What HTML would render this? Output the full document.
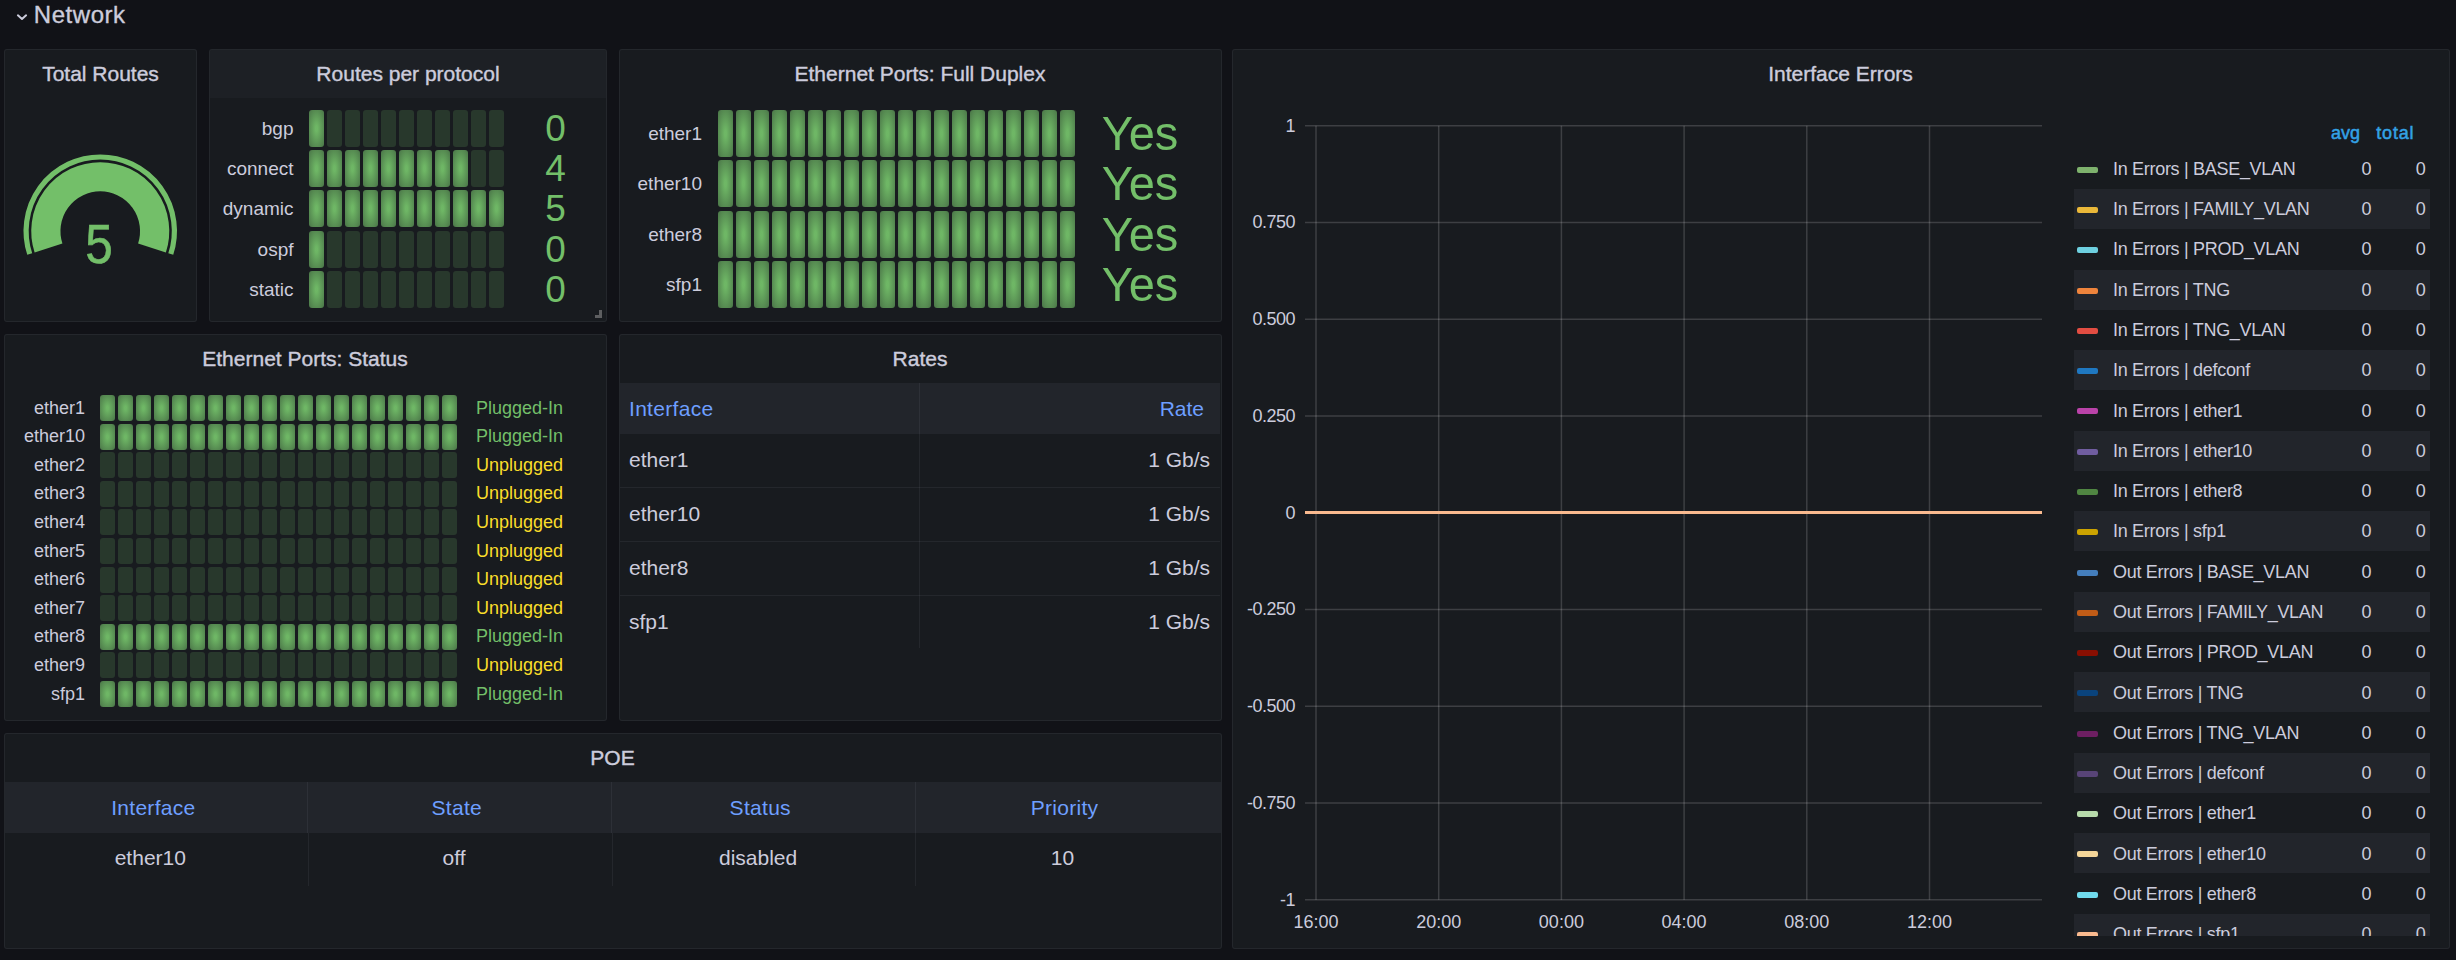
<!DOCTYPE html>
<html><head><meta charset="utf-8"><style>
html,body{margin:0;padding:0;}
body{width:2456px;height:960px;overflow:hidden;background:#111217;position:relative;font-family:"Liberation Sans", sans-serif;}
.t{position:absolute;white-space:pre;font-family:"Liberation Sans", sans-serif;}
.p{position:absolute;box-sizing:border-box;background:#181b1f;border:1px solid rgba(204,204,220,0.07);border-radius:3px;}
</style></head><body>
<svg style="position:absolute;left:0;top:0" width="40" height="40"><polyline points="17.9,15.3 22,19.0 26.1,15.3" fill="none" stroke="#ccccdc" stroke-width="2" stroke-linecap="round" stroke-linejoin="round"/></svg>
<div class="t" style="left:33.8px;top:3.00px;font-size:24px;line-height:24px;color:#ccccdc;font-weight:400;letter-spacing:0.55px;-webkit-text-stroke:0.35px #ccccdc;">Network</div>
<div class="p" style="left:4px;top:49px;width:193px;height:273px;"></div>
<div class="p" style="left:209px;top:49px;width:398px;height:273px;"></div>
<div style="position:absolute;left:210px;top:50px;width:396px;height:48px;background:rgba(204,204,220,0.03);border-radius:2px 2px 0 0;"></div>
<div class="p" style="left:619px;top:49px;width:603px;height:273px;"></div>
<div class="p" style="left:1232px;top:49px;width:1218px;height:900px;"></div>
<div class="p" style="left:4px;top:334px;width:603px;height:387px;"></div>
<div class="p" style="left:619px;top:334px;width:603px;height:387px;"></div>
<div class="p" style="left:4px;top:733px;width:1218px;height:216px;"></div>
<div class="t" style="left:-899.5px;width:2000px;text-align:center;top:63.15px;font-size:21px;line-height:21px;color:#ccccdc;font-weight:400;-webkit-text-stroke:0.4px #ccccdc;">Total Routes</div>
<div class="t" style="left:-592px;width:2000px;text-align:center;top:63.15px;font-size:21px;line-height:21px;color:#ccccdc;font-weight:400;-webkit-text-stroke:0.4px #ccccdc;">Routes per protocol</div>
<div class="t" style="left:-80px;width:2000px;text-align:center;top:63.15px;font-size:21px;line-height:21px;color:#ccccdc;font-weight:400;-webkit-text-stroke:0.4px #ccccdc;">Ethernet Ports: Full Duplex</div>
<div class="t" style="left:840.5px;width:2000px;text-align:center;top:63.15px;font-size:21px;line-height:21px;color:#ccccdc;font-weight:400;-webkit-text-stroke:0.4px #ccccdc;">Interface Errors</div>
<div class="t" style="left:-695px;width:2000px;text-align:center;top:348.15px;font-size:21px;line-height:21px;color:#ccccdc;font-weight:400;-webkit-text-stroke:0.4px #ccccdc;">Ethernet Ports: Status</div>
<div class="t" style="left:-80px;width:2000px;text-align:center;top:348.15px;font-size:21px;line-height:21px;color:#ccccdc;font-weight:400;-webkit-text-stroke:0.4px #ccccdc;">Rates</div>
<div class="t" style="left:-387.5px;width:2000px;text-align:center;top:747.15px;font-size:21px;line-height:21px;color:#ccccdc;font-weight:400;-webkit-text-stroke:0.4px #ccccdc;">POE</div>
<svg style="position:absolute;left:0;top:0" width="200" height="320"><path d="M48.51,247.96 A54.4,54.4 0 1 1 151.99,247.96" fill="none" stroke="#73bf69" stroke-width="29.2"/><path d="M29.73,254.06 A74.15,74.15 0 1 1 170.77,254.06" fill="none" stroke="#73bf69" stroke-width="5.2"/></svg>
<div class="t" style="left:-900.8px;width:2000px;text-align:center;top:217.05px;font-size:55px;line-height:55px;color:#73bf69;font-weight:400;transform:scaleX(0.9);-webkit-text-stroke:0.6px #73bf69;">5</div>
<div class="t" style="left:-706.5px;width:1000px;text-align:right;top:118.85px;font-size:19px;line-height:19px;color:#ccccdc;font-weight:400;">bgp</div>
<div style="position:absolute;left:309px;top:110px;width:15px;height:37px;background-image:radial-gradient(rgba(115,191,105,0.95) 10%, rgba(115,191,105,0.55));border-radius:3px;"></div>
<div style="position:absolute;left:327px;top:110px;width:15px;height:37px;background-color:rgba(115,191,105,0.18);border-radius:3px;"></div>
<div style="position:absolute;left:345px;top:110px;width:15px;height:37px;background-color:rgba(115,191,105,0.18);border-radius:3px;"></div>
<div style="position:absolute;left:363px;top:110px;width:15px;height:37px;background-color:rgba(115,191,105,0.18);border-radius:3px;"></div>
<div style="position:absolute;left:381px;top:110px;width:15px;height:37px;background-color:rgba(115,191,105,0.18);border-radius:3px;"></div>
<div style="position:absolute;left:399px;top:110px;width:15px;height:37px;background-color:rgba(115,191,105,0.18);border-radius:3px;"></div>
<div style="position:absolute;left:417px;top:110px;width:15px;height:37px;background-color:rgba(115,191,105,0.18);border-radius:3px;"></div>
<div style="position:absolute;left:435px;top:110px;width:15px;height:37px;background-color:rgba(115,191,105,0.18);border-radius:3px;"></div>
<div style="position:absolute;left:453px;top:110px;width:15px;height:37px;background-color:rgba(115,191,105,0.18);border-radius:3px;"></div>
<div style="position:absolute;left:471px;top:110px;width:15px;height:37px;background-color:rgba(115,191,105,0.18);border-radius:3px;"></div>
<div style="position:absolute;left:489px;top:110px;width:15px;height:37px;background-color:rgba(115,191,105,0.18);border-radius:3px;"></div>
<div class="t" style="left:-444.5px;width:2000px;text-align:center;top:110.05px;font-size:37px;line-height:37px;color:#73bf69;font-weight:400;">0</div>
<div class="t" style="left:-706.5px;width:1000px;text-align:right;top:158.85px;font-size:19px;line-height:19px;color:#ccccdc;font-weight:400;">connect</div>
<div style="position:absolute;left:309px;top:150px;width:15px;height:37px;background-image:radial-gradient(rgba(115,191,105,0.95) 10%, rgba(115,191,105,0.55));border-radius:3px;"></div>
<div style="position:absolute;left:327px;top:150px;width:15px;height:37px;background-image:radial-gradient(rgba(115,191,105,0.95) 10%, rgba(115,191,105,0.55));border-radius:3px;"></div>
<div style="position:absolute;left:345px;top:150px;width:15px;height:37px;background-image:radial-gradient(rgba(115,191,105,0.95) 10%, rgba(115,191,105,0.55));border-radius:3px;"></div>
<div style="position:absolute;left:363px;top:150px;width:15px;height:37px;background-image:radial-gradient(rgba(115,191,105,0.95) 10%, rgba(115,191,105,0.55));border-radius:3px;"></div>
<div style="position:absolute;left:381px;top:150px;width:15px;height:37px;background-image:radial-gradient(rgba(115,191,105,0.95) 10%, rgba(115,191,105,0.55));border-radius:3px;"></div>
<div style="position:absolute;left:399px;top:150px;width:15px;height:37px;background-image:radial-gradient(rgba(115,191,105,0.95) 10%, rgba(115,191,105,0.55));border-radius:3px;"></div>
<div style="position:absolute;left:417px;top:150px;width:15px;height:37px;background-image:radial-gradient(rgba(115,191,105,0.95) 10%, rgba(115,191,105,0.55));border-radius:3px;"></div>
<div style="position:absolute;left:435px;top:150px;width:15px;height:37px;background-image:radial-gradient(rgba(115,191,105,0.95) 10%, rgba(115,191,105,0.55));border-radius:3px;"></div>
<div style="position:absolute;left:453px;top:150px;width:15px;height:37px;background-image:radial-gradient(rgba(115,191,105,0.95) 10%, rgba(115,191,105,0.55));border-radius:3px;"></div>
<div style="position:absolute;left:471px;top:150px;width:15px;height:37px;background-color:rgba(115,191,105,0.18);border-radius:3px;"></div>
<div style="position:absolute;left:489px;top:150px;width:15px;height:37px;background-color:rgba(115,191,105,0.18);border-radius:3px;"></div>
<div class="t" style="left:-444.5px;width:2000px;text-align:center;top:150.05px;font-size:37px;line-height:37px;color:#73bf69;font-weight:400;">4</div>
<div class="t" style="left:-706.5px;width:1000px;text-align:right;top:198.85px;font-size:19px;line-height:19px;color:#ccccdc;font-weight:400;">dynamic</div>
<div style="position:absolute;left:309px;top:190px;width:15px;height:37px;background-image:radial-gradient(rgba(115,191,105,0.95) 10%, rgba(115,191,105,0.55));border-radius:3px;"></div>
<div style="position:absolute;left:327px;top:190px;width:15px;height:37px;background-image:radial-gradient(rgba(115,191,105,0.95) 10%, rgba(115,191,105,0.55));border-radius:3px;"></div>
<div style="position:absolute;left:345px;top:190px;width:15px;height:37px;background-image:radial-gradient(rgba(115,191,105,0.95) 10%, rgba(115,191,105,0.55));border-radius:3px;"></div>
<div style="position:absolute;left:363px;top:190px;width:15px;height:37px;background-image:radial-gradient(rgba(115,191,105,0.95) 10%, rgba(115,191,105,0.55));border-radius:3px;"></div>
<div style="position:absolute;left:381px;top:190px;width:15px;height:37px;background-image:radial-gradient(rgba(115,191,105,0.95) 10%, rgba(115,191,105,0.55));border-radius:3px;"></div>
<div style="position:absolute;left:399px;top:190px;width:15px;height:37px;background-image:radial-gradient(rgba(115,191,105,0.95) 10%, rgba(115,191,105,0.55));border-radius:3px;"></div>
<div style="position:absolute;left:417px;top:190px;width:15px;height:37px;background-image:radial-gradient(rgba(115,191,105,0.95) 10%, rgba(115,191,105,0.55));border-radius:3px;"></div>
<div style="position:absolute;left:435px;top:190px;width:15px;height:37px;background-image:radial-gradient(rgba(115,191,105,0.95) 10%, rgba(115,191,105,0.55));border-radius:3px;"></div>
<div style="position:absolute;left:453px;top:190px;width:15px;height:37px;background-image:radial-gradient(rgba(115,191,105,0.95) 10%, rgba(115,191,105,0.55));border-radius:3px;"></div>
<div style="position:absolute;left:471px;top:190px;width:15px;height:37px;background-image:radial-gradient(rgba(115,191,105,0.95) 10%, rgba(115,191,105,0.55));border-radius:3px;"></div>
<div style="position:absolute;left:489px;top:190px;width:15px;height:37px;background-image:radial-gradient(rgba(115,191,105,0.95) 10%, rgba(115,191,105,0.55));border-radius:3px;"></div>
<div class="t" style="left:-444.5px;width:2000px;text-align:center;top:190.05px;font-size:37px;line-height:37px;color:#73bf69;font-weight:400;">5</div>
<div class="t" style="left:-706.5px;width:1000px;text-align:right;top:239.85px;font-size:19px;line-height:19px;color:#ccccdc;font-weight:400;">ospf</div>
<div style="position:absolute;left:309px;top:231px;width:15px;height:37px;background-image:radial-gradient(rgba(115,191,105,0.95) 10%, rgba(115,191,105,0.55));border-radius:3px;"></div>
<div style="position:absolute;left:327px;top:231px;width:15px;height:37px;background-color:rgba(115,191,105,0.18);border-radius:3px;"></div>
<div style="position:absolute;left:345px;top:231px;width:15px;height:37px;background-color:rgba(115,191,105,0.18);border-radius:3px;"></div>
<div style="position:absolute;left:363px;top:231px;width:15px;height:37px;background-color:rgba(115,191,105,0.18);border-radius:3px;"></div>
<div style="position:absolute;left:381px;top:231px;width:15px;height:37px;background-color:rgba(115,191,105,0.18);border-radius:3px;"></div>
<div style="position:absolute;left:399px;top:231px;width:15px;height:37px;background-color:rgba(115,191,105,0.18);border-radius:3px;"></div>
<div style="position:absolute;left:417px;top:231px;width:15px;height:37px;background-color:rgba(115,191,105,0.18);border-radius:3px;"></div>
<div style="position:absolute;left:435px;top:231px;width:15px;height:37px;background-color:rgba(115,191,105,0.18);border-radius:3px;"></div>
<div style="position:absolute;left:453px;top:231px;width:15px;height:37px;background-color:rgba(115,191,105,0.18);border-radius:3px;"></div>
<div style="position:absolute;left:471px;top:231px;width:15px;height:37px;background-color:rgba(115,191,105,0.18);border-radius:3px;"></div>
<div style="position:absolute;left:489px;top:231px;width:15px;height:37px;background-color:rgba(115,191,105,0.18);border-radius:3px;"></div>
<div class="t" style="left:-444.5px;width:2000px;text-align:center;top:231.05px;font-size:37px;line-height:37px;color:#73bf69;font-weight:400;">0</div>
<div class="t" style="left:-706.5px;width:1000px;text-align:right;top:279.85px;font-size:19px;line-height:19px;color:#ccccdc;font-weight:400;">static</div>
<div style="position:absolute;left:309px;top:271px;width:15px;height:37px;background-image:radial-gradient(rgba(115,191,105,0.95) 10%, rgba(115,191,105,0.55));border-radius:3px;"></div>
<div style="position:absolute;left:327px;top:271px;width:15px;height:37px;background-color:rgba(115,191,105,0.18);border-radius:3px;"></div>
<div style="position:absolute;left:345px;top:271px;width:15px;height:37px;background-color:rgba(115,191,105,0.18);border-radius:3px;"></div>
<div style="position:absolute;left:363px;top:271px;width:15px;height:37px;background-color:rgba(115,191,105,0.18);border-radius:3px;"></div>
<div style="position:absolute;left:381px;top:271px;width:15px;height:37px;background-color:rgba(115,191,105,0.18);border-radius:3px;"></div>
<div style="position:absolute;left:399px;top:271px;width:15px;height:37px;background-color:rgba(115,191,105,0.18);border-radius:3px;"></div>
<div style="position:absolute;left:417px;top:271px;width:15px;height:37px;background-color:rgba(115,191,105,0.18);border-radius:3px;"></div>
<div style="position:absolute;left:435px;top:271px;width:15px;height:37px;background-color:rgba(115,191,105,0.18);border-radius:3px;"></div>
<div style="position:absolute;left:453px;top:271px;width:15px;height:37px;background-color:rgba(115,191,105,0.18);border-radius:3px;"></div>
<div style="position:absolute;left:471px;top:271px;width:15px;height:37px;background-color:rgba(115,191,105,0.18);border-radius:3px;"></div>
<div style="position:absolute;left:489px;top:271px;width:15px;height:37px;background-color:rgba(115,191,105,0.18);border-radius:3px;"></div>
<div class="t" style="left:-444.5px;width:2000px;text-align:center;top:271.05px;font-size:37px;line-height:37px;color:#73bf69;font-weight:400;">0</div>
<div style="position:absolute;left:599px;top:310px;width:3px;height:8px;background:#5d5e60;"></div>
<div style="position:absolute;left:595px;top:315px;width:7px;height:3px;background:#5d5e60;"></div>
<div class="t" style="left:-298px;width:1000px;text-align:right;top:123.85px;font-size:19px;line-height:19px;color:#ccccdc;font-weight:400;">ether1</div>
<div style="position:absolute;left:718px;top:110px;width:15px;height:47px;background-image:radial-gradient(rgba(115,191,105,0.95) 10%, rgba(115,191,105,0.55));border-radius:3px;"></div>
<div style="position:absolute;left:736px;top:110px;width:15px;height:47px;background-image:radial-gradient(rgba(115,191,105,0.95) 10%, rgba(115,191,105,0.55));border-radius:3px;"></div>
<div style="position:absolute;left:754px;top:110px;width:15px;height:47px;background-image:radial-gradient(rgba(115,191,105,0.95) 10%, rgba(115,191,105,0.55));border-radius:3px;"></div>
<div style="position:absolute;left:772px;top:110px;width:15px;height:47px;background-image:radial-gradient(rgba(115,191,105,0.95) 10%, rgba(115,191,105,0.55));border-radius:3px;"></div>
<div style="position:absolute;left:790px;top:110px;width:15px;height:47px;background-image:radial-gradient(rgba(115,191,105,0.95) 10%, rgba(115,191,105,0.55));border-radius:3px;"></div>
<div style="position:absolute;left:808px;top:110px;width:15px;height:47px;background-image:radial-gradient(rgba(115,191,105,0.95) 10%, rgba(115,191,105,0.55));border-radius:3px;"></div>
<div style="position:absolute;left:826px;top:110px;width:15px;height:47px;background-image:radial-gradient(rgba(115,191,105,0.95) 10%, rgba(115,191,105,0.55));border-radius:3px;"></div>
<div style="position:absolute;left:844px;top:110px;width:15px;height:47px;background-image:radial-gradient(rgba(115,191,105,0.95) 10%, rgba(115,191,105,0.55));border-radius:3px;"></div>
<div style="position:absolute;left:862px;top:110px;width:15px;height:47px;background-image:radial-gradient(rgba(115,191,105,0.95) 10%, rgba(115,191,105,0.55));border-radius:3px;"></div>
<div style="position:absolute;left:880px;top:110px;width:15px;height:47px;background-image:radial-gradient(rgba(115,191,105,0.95) 10%, rgba(115,191,105,0.55));border-radius:3px;"></div>
<div style="position:absolute;left:898px;top:110px;width:15px;height:47px;background-image:radial-gradient(rgba(115,191,105,0.95) 10%, rgba(115,191,105,0.55));border-radius:3px;"></div>
<div style="position:absolute;left:916px;top:110px;width:15px;height:47px;background-image:radial-gradient(rgba(115,191,105,0.95) 10%, rgba(115,191,105,0.55));border-radius:3px;"></div>
<div style="position:absolute;left:934px;top:110px;width:15px;height:47px;background-image:radial-gradient(rgba(115,191,105,0.95) 10%, rgba(115,191,105,0.55));border-radius:3px;"></div>
<div style="position:absolute;left:952px;top:110px;width:15px;height:47px;background-image:radial-gradient(rgba(115,191,105,0.95) 10%, rgba(115,191,105,0.55));border-radius:3px;"></div>
<div style="position:absolute;left:970px;top:110px;width:15px;height:47px;background-image:radial-gradient(rgba(115,191,105,0.95) 10%, rgba(115,191,105,0.55));border-radius:3px;"></div>
<div style="position:absolute;left:988px;top:110px;width:15px;height:47px;background-image:radial-gradient(rgba(115,191,105,0.95) 10%, rgba(115,191,105,0.55));border-radius:3px;"></div>
<div style="position:absolute;left:1006px;top:110px;width:15px;height:47px;background-image:radial-gradient(rgba(115,191,105,0.95) 10%, rgba(115,191,105,0.55));border-radius:3px;"></div>
<div style="position:absolute;left:1024px;top:110px;width:15px;height:47px;background-image:radial-gradient(rgba(115,191,105,0.95) 10%, rgba(115,191,105,0.55));border-radius:3px;"></div>
<div style="position:absolute;left:1042px;top:110px;width:15px;height:47px;background-image:radial-gradient(rgba(115,191,105,0.95) 10%, rgba(115,191,105,0.55));border-radius:3px;"></div>
<div style="position:absolute;left:1060px;top:110px;width:15px;height:47px;background-image:radial-gradient(rgba(115,191,105,0.95) 10%, rgba(115,191,105,0.55));border-radius:3px;"></div>
<div class="t" style="left:139.5999999999999px;width:2000px;text-align:center;top:109.35px;font-size:49px;line-height:49px;color:#73bf69;font-weight:400;transform:scaleX(0.96);">Yes</div>
<div class="t" style="left:-298px;width:1000px;text-align:right;top:173.85px;font-size:19px;line-height:19px;color:#ccccdc;font-weight:400;">ether10</div>
<div style="position:absolute;left:718px;top:160px;width:15px;height:47px;background-image:radial-gradient(rgba(115,191,105,0.95) 10%, rgba(115,191,105,0.55));border-radius:3px;"></div>
<div style="position:absolute;left:736px;top:160px;width:15px;height:47px;background-image:radial-gradient(rgba(115,191,105,0.95) 10%, rgba(115,191,105,0.55));border-radius:3px;"></div>
<div style="position:absolute;left:754px;top:160px;width:15px;height:47px;background-image:radial-gradient(rgba(115,191,105,0.95) 10%, rgba(115,191,105,0.55));border-radius:3px;"></div>
<div style="position:absolute;left:772px;top:160px;width:15px;height:47px;background-image:radial-gradient(rgba(115,191,105,0.95) 10%, rgba(115,191,105,0.55));border-radius:3px;"></div>
<div style="position:absolute;left:790px;top:160px;width:15px;height:47px;background-image:radial-gradient(rgba(115,191,105,0.95) 10%, rgba(115,191,105,0.55));border-radius:3px;"></div>
<div style="position:absolute;left:808px;top:160px;width:15px;height:47px;background-image:radial-gradient(rgba(115,191,105,0.95) 10%, rgba(115,191,105,0.55));border-radius:3px;"></div>
<div style="position:absolute;left:826px;top:160px;width:15px;height:47px;background-image:radial-gradient(rgba(115,191,105,0.95) 10%, rgba(115,191,105,0.55));border-radius:3px;"></div>
<div style="position:absolute;left:844px;top:160px;width:15px;height:47px;background-image:radial-gradient(rgba(115,191,105,0.95) 10%, rgba(115,191,105,0.55));border-radius:3px;"></div>
<div style="position:absolute;left:862px;top:160px;width:15px;height:47px;background-image:radial-gradient(rgba(115,191,105,0.95) 10%, rgba(115,191,105,0.55));border-radius:3px;"></div>
<div style="position:absolute;left:880px;top:160px;width:15px;height:47px;background-image:radial-gradient(rgba(115,191,105,0.95) 10%, rgba(115,191,105,0.55));border-radius:3px;"></div>
<div style="position:absolute;left:898px;top:160px;width:15px;height:47px;background-image:radial-gradient(rgba(115,191,105,0.95) 10%, rgba(115,191,105,0.55));border-radius:3px;"></div>
<div style="position:absolute;left:916px;top:160px;width:15px;height:47px;background-image:radial-gradient(rgba(115,191,105,0.95) 10%, rgba(115,191,105,0.55));border-radius:3px;"></div>
<div style="position:absolute;left:934px;top:160px;width:15px;height:47px;background-image:radial-gradient(rgba(115,191,105,0.95) 10%, rgba(115,191,105,0.55));border-radius:3px;"></div>
<div style="position:absolute;left:952px;top:160px;width:15px;height:47px;background-image:radial-gradient(rgba(115,191,105,0.95) 10%, rgba(115,191,105,0.55));border-radius:3px;"></div>
<div style="position:absolute;left:970px;top:160px;width:15px;height:47px;background-image:radial-gradient(rgba(115,191,105,0.95) 10%, rgba(115,191,105,0.55));border-radius:3px;"></div>
<div style="position:absolute;left:988px;top:160px;width:15px;height:47px;background-image:radial-gradient(rgba(115,191,105,0.95) 10%, rgba(115,191,105,0.55));border-radius:3px;"></div>
<div style="position:absolute;left:1006px;top:160px;width:15px;height:47px;background-image:radial-gradient(rgba(115,191,105,0.95) 10%, rgba(115,191,105,0.55));border-radius:3px;"></div>
<div style="position:absolute;left:1024px;top:160px;width:15px;height:47px;background-image:radial-gradient(rgba(115,191,105,0.95) 10%, rgba(115,191,105,0.55));border-radius:3px;"></div>
<div style="position:absolute;left:1042px;top:160px;width:15px;height:47px;background-image:radial-gradient(rgba(115,191,105,0.95) 10%, rgba(115,191,105,0.55));border-radius:3px;"></div>
<div style="position:absolute;left:1060px;top:160px;width:15px;height:47px;background-image:radial-gradient(rgba(115,191,105,0.95) 10%, rgba(115,191,105,0.55));border-radius:3px;"></div>
<div class="t" style="left:139.5999999999999px;width:2000px;text-align:center;top:159.35px;font-size:49px;line-height:49px;color:#73bf69;font-weight:400;transform:scaleX(0.96);">Yes</div>
<div class="t" style="left:-298px;width:1000px;text-align:right;top:224.85px;font-size:19px;line-height:19px;color:#ccccdc;font-weight:400;">ether8</div>
<div style="position:absolute;left:718px;top:211px;width:15px;height:47px;background-image:radial-gradient(rgba(115,191,105,0.95) 10%, rgba(115,191,105,0.55));border-radius:3px;"></div>
<div style="position:absolute;left:736px;top:211px;width:15px;height:47px;background-image:radial-gradient(rgba(115,191,105,0.95) 10%, rgba(115,191,105,0.55));border-radius:3px;"></div>
<div style="position:absolute;left:754px;top:211px;width:15px;height:47px;background-image:radial-gradient(rgba(115,191,105,0.95) 10%, rgba(115,191,105,0.55));border-radius:3px;"></div>
<div style="position:absolute;left:772px;top:211px;width:15px;height:47px;background-image:radial-gradient(rgba(115,191,105,0.95) 10%, rgba(115,191,105,0.55));border-radius:3px;"></div>
<div style="position:absolute;left:790px;top:211px;width:15px;height:47px;background-image:radial-gradient(rgba(115,191,105,0.95) 10%, rgba(115,191,105,0.55));border-radius:3px;"></div>
<div style="position:absolute;left:808px;top:211px;width:15px;height:47px;background-image:radial-gradient(rgba(115,191,105,0.95) 10%, rgba(115,191,105,0.55));border-radius:3px;"></div>
<div style="position:absolute;left:826px;top:211px;width:15px;height:47px;background-image:radial-gradient(rgba(115,191,105,0.95) 10%, rgba(115,191,105,0.55));border-radius:3px;"></div>
<div style="position:absolute;left:844px;top:211px;width:15px;height:47px;background-image:radial-gradient(rgba(115,191,105,0.95) 10%, rgba(115,191,105,0.55));border-radius:3px;"></div>
<div style="position:absolute;left:862px;top:211px;width:15px;height:47px;background-image:radial-gradient(rgba(115,191,105,0.95) 10%, rgba(115,191,105,0.55));border-radius:3px;"></div>
<div style="position:absolute;left:880px;top:211px;width:15px;height:47px;background-image:radial-gradient(rgba(115,191,105,0.95) 10%, rgba(115,191,105,0.55));border-radius:3px;"></div>
<div style="position:absolute;left:898px;top:211px;width:15px;height:47px;background-image:radial-gradient(rgba(115,191,105,0.95) 10%, rgba(115,191,105,0.55));border-radius:3px;"></div>
<div style="position:absolute;left:916px;top:211px;width:15px;height:47px;background-image:radial-gradient(rgba(115,191,105,0.95) 10%, rgba(115,191,105,0.55));border-radius:3px;"></div>
<div style="position:absolute;left:934px;top:211px;width:15px;height:47px;background-image:radial-gradient(rgba(115,191,105,0.95) 10%, rgba(115,191,105,0.55));border-radius:3px;"></div>
<div style="position:absolute;left:952px;top:211px;width:15px;height:47px;background-image:radial-gradient(rgba(115,191,105,0.95) 10%, rgba(115,191,105,0.55));border-radius:3px;"></div>
<div style="position:absolute;left:970px;top:211px;width:15px;height:47px;background-image:radial-gradient(rgba(115,191,105,0.95) 10%, rgba(115,191,105,0.55));border-radius:3px;"></div>
<div style="position:absolute;left:988px;top:211px;width:15px;height:47px;background-image:radial-gradient(rgba(115,191,105,0.95) 10%, rgba(115,191,105,0.55));border-radius:3px;"></div>
<div style="position:absolute;left:1006px;top:211px;width:15px;height:47px;background-image:radial-gradient(rgba(115,191,105,0.95) 10%, rgba(115,191,105,0.55));border-radius:3px;"></div>
<div style="position:absolute;left:1024px;top:211px;width:15px;height:47px;background-image:radial-gradient(rgba(115,191,105,0.95) 10%, rgba(115,191,105,0.55));border-radius:3px;"></div>
<div style="position:absolute;left:1042px;top:211px;width:15px;height:47px;background-image:radial-gradient(rgba(115,191,105,0.95) 10%, rgba(115,191,105,0.55));border-radius:3px;"></div>
<div style="position:absolute;left:1060px;top:211px;width:15px;height:47px;background-image:radial-gradient(rgba(115,191,105,0.95) 10%, rgba(115,191,105,0.55));border-radius:3px;"></div>
<div class="t" style="left:139.5999999999999px;width:2000px;text-align:center;top:210.35px;font-size:49px;line-height:49px;color:#73bf69;font-weight:400;transform:scaleX(0.96);">Yes</div>
<div class="t" style="left:-298px;width:1000px;text-align:right;top:274.85px;font-size:19px;line-height:19px;color:#ccccdc;font-weight:400;">sfp1</div>
<div style="position:absolute;left:718px;top:261px;width:15px;height:47px;background-image:radial-gradient(rgba(115,191,105,0.95) 10%, rgba(115,191,105,0.55));border-radius:3px;"></div>
<div style="position:absolute;left:736px;top:261px;width:15px;height:47px;background-image:radial-gradient(rgba(115,191,105,0.95) 10%, rgba(115,191,105,0.55));border-radius:3px;"></div>
<div style="position:absolute;left:754px;top:261px;width:15px;height:47px;background-image:radial-gradient(rgba(115,191,105,0.95) 10%, rgba(115,191,105,0.55));border-radius:3px;"></div>
<div style="position:absolute;left:772px;top:261px;width:15px;height:47px;background-image:radial-gradient(rgba(115,191,105,0.95) 10%, rgba(115,191,105,0.55));border-radius:3px;"></div>
<div style="position:absolute;left:790px;top:261px;width:15px;height:47px;background-image:radial-gradient(rgba(115,191,105,0.95) 10%, rgba(115,191,105,0.55));border-radius:3px;"></div>
<div style="position:absolute;left:808px;top:261px;width:15px;height:47px;background-image:radial-gradient(rgba(115,191,105,0.95) 10%, rgba(115,191,105,0.55));border-radius:3px;"></div>
<div style="position:absolute;left:826px;top:261px;width:15px;height:47px;background-image:radial-gradient(rgba(115,191,105,0.95) 10%, rgba(115,191,105,0.55));border-radius:3px;"></div>
<div style="position:absolute;left:844px;top:261px;width:15px;height:47px;background-image:radial-gradient(rgba(115,191,105,0.95) 10%, rgba(115,191,105,0.55));border-radius:3px;"></div>
<div style="position:absolute;left:862px;top:261px;width:15px;height:47px;background-image:radial-gradient(rgba(115,191,105,0.95) 10%, rgba(115,191,105,0.55));border-radius:3px;"></div>
<div style="position:absolute;left:880px;top:261px;width:15px;height:47px;background-image:radial-gradient(rgba(115,191,105,0.95) 10%, rgba(115,191,105,0.55));border-radius:3px;"></div>
<div style="position:absolute;left:898px;top:261px;width:15px;height:47px;background-image:radial-gradient(rgba(115,191,105,0.95) 10%, rgba(115,191,105,0.55));border-radius:3px;"></div>
<div style="position:absolute;left:916px;top:261px;width:15px;height:47px;background-image:radial-gradient(rgba(115,191,105,0.95) 10%, rgba(115,191,105,0.55));border-radius:3px;"></div>
<div style="position:absolute;left:934px;top:261px;width:15px;height:47px;background-image:radial-gradient(rgba(115,191,105,0.95) 10%, rgba(115,191,105,0.55));border-radius:3px;"></div>
<div style="position:absolute;left:952px;top:261px;width:15px;height:47px;background-image:radial-gradient(rgba(115,191,105,0.95) 10%, rgba(115,191,105,0.55));border-radius:3px;"></div>
<div style="position:absolute;left:970px;top:261px;width:15px;height:47px;background-image:radial-gradient(rgba(115,191,105,0.95) 10%, rgba(115,191,105,0.55));border-radius:3px;"></div>
<div style="position:absolute;left:988px;top:261px;width:15px;height:47px;background-image:radial-gradient(rgba(115,191,105,0.95) 10%, rgba(115,191,105,0.55));border-radius:3px;"></div>
<div style="position:absolute;left:1006px;top:261px;width:15px;height:47px;background-image:radial-gradient(rgba(115,191,105,0.95) 10%, rgba(115,191,105,0.55));border-radius:3px;"></div>
<div style="position:absolute;left:1024px;top:261px;width:15px;height:47px;background-image:radial-gradient(rgba(115,191,105,0.95) 10%, rgba(115,191,105,0.55));border-radius:3px;"></div>
<div style="position:absolute;left:1042px;top:261px;width:15px;height:47px;background-image:radial-gradient(rgba(115,191,105,0.95) 10%, rgba(115,191,105,0.55));border-radius:3px;"></div>
<div style="position:absolute;left:1060px;top:261px;width:15px;height:47px;background-image:radial-gradient(rgba(115,191,105,0.95) 10%, rgba(115,191,105,0.55));border-radius:3px;"></div>
<div class="t" style="left:139.5999999999999px;width:2000px;text-align:center;top:260.35px;font-size:49px;line-height:49px;color:#73bf69;font-weight:400;transform:scaleX(0.96);">Yes</div>
<div class="t" style="left:-915px;width:1000px;text-align:right;top:398.60px;font-size:18px;line-height:18px;color:#ccccdc;font-weight:400;">ether1</div>
<div style="position:absolute;left:100px;top:395px;width:15px;height:26px;background-image:radial-gradient(rgba(115,191,105,0.95) 10%, rgba(115,191,105,0.55));border-radius:3px;"></div>
<div style="position:absolute;left:118px;top:395px;width:15px;height:26px;background-image:radial-gradient(rgba(115,191,105,0.95) 10%, rgba(115,191,105,0.55));border-radius:3px;"></div>
<div style="position:absolute;left:136px;top:395px;width:15px;height:26px;background-image:radial-gradient(rgba(115,191,105,0.95) 10%, rgba(115,191,105,0.55));border-radius:3px;"></div>
<div style="position:absolute;left:154px;top:395px;width:15px;height:26px;background-image:radial-gradient(rgba(115,191,105,0.95) 10%, rgba(115,191,105,0.55));border-radius:3px;"></div>
<div style="position:absolute;left:172px;top:395px;width:15px;height:26px;background-image:radial-gradient(rgba(115,191,105,0.95) 10%, rgba(115,191,105,0.55));border-radius:3px;"></div>
<div style="position:absolute;left:190px;top:395px;width:15px;height:26px;background-image:radial-gradient(rgba(115,191,105,0.95) 10%, rgba(115,191,105,0.55));border-radius:3px;"></div>
<div style="position:absolute;left:208px;top:395px;width:15px;height:26px;background-image:radial-gradient(rgba(115,191,105,0.95) 10%, rgba(115,191,105,0.55));border-radius:3px;"></div>
<div style="position:absolute;left:226px;top:395px;width:15px;height:26px;background-image:radial-gradient(rgba(115,191,105,0.95) 10%, rgba(115,191,105,0.55));border-radius:3px;"></div>
<div style="position:absolute;left:244px;top:395px;width:15px;height:26px;background-image:radial-gradient(rgba(115,191,105,0.95) 10%, rgba(115,191,105,0.55));border-radius:3px;"></div>
<div style="position:absolute;left:262px;top:395px;width:15px;height:26px;background-image:radial-gradient(rgba(115,191,105,0.95) 10%, rgba(115,191,105,0.55));border-radius:3px;"></div>
<div style="position:absolute;left:280px;top:395px;width:15px;height:26px;background-image:radial-gradient(rgba(115,191,105,0.95) 10%, rgba(115,191,105,0.55));border-radius:3px;"></div>
<div style="position:absolute;left:298px;top:395px;width:15px;height:26px;background-image:radial-gradient(rgba(115,191,105,0.95) 10%, rgba(115,191,105,0.55));border-radius:3px;"></div>
<div style="position:absolute;left:316px;top:395px;width:15px;height:26px;background-image:radial-gradient(rgba(115,191,105,0.95) 10%, rgba(115,191,105,0.55));border-radius:3px;"></div>
<div style="position:absolute;left:334px;top:395px;width:15px;height:26px;background-image:radial-gradient(rgba(115,191,105,0.95) 10%, rgba(115,191,105,0.55));border-radius:3px;"></div>
<div style="position:absolute;left:352px;top:395px;width:15px;height:26px;background-image:radial-gradient(rgba(115,191,105,0.95) 10%, rgba(115,191,105,0.55));border-radius:3px;"></div>
<div style="position:absolute;left:370px;top:395px;width:15px;height:26px;background-image:radial-gradient(rgba(115,191,105,0.95) 10%, rgba(115,191,105,0.55));border-radius:3px;"></div>
<div style="position:absolute;left:388px;top:395px;width:15px;height:26px;background-image:radial-gradient(rgba(115,191,105,0.95) 10%, rgba(115,191,105,0.55));border-radius:3px;"></div>
<div style="position:absolute;left:406px;top:395px;width:15px;height:26px;background-image:radial-gradient(rgba(115,191,105,0.95) 10%, rgba(115,191,105,0.55));border-radius:3px;"></div>
<div style="position:absolute;left:424px;top:395px;width:15px;height:26px;background-image:radial-gradient(rgba(115,191,105,0.95) 10%, rgba(115,191,105,0.55));border-radius:3px;"></div>
<div style="position:absolute;left:442px;top:395px;width:15px;height:26px;background-image:radial-gradient(rgba(115,191,105,0.95) 10%, rgba(115,191,105,0.55));border-radius:3px;"></div>
<div class="t" style="left:476px;top:398.60px;font-size:18px;line-height:18px;color:#73bf69;font-weight:400;">Plugged-In</div>
<div class="t" style="left:-915px;width:1000px;text-align:right;top:427.20px;font-size:18px;line-height:18px;color:#ccccdc;font-weight:400;">ether10</div>
<div style="position:absolute;left:100px;top:424px;width:15px;height:26px;background-image:radial-gradient(rgba(115,191,105,0.95) 10%, rgba(115,191,105,0.55));border-radius:3px;"></div>
<div style="position:absolute;left:118px;top:424px;width:15px;height:26px;background-image:radial-gradient(rgba(115,191,105,0.95) 10%, rgba(115,191,105,0.55));border-radius:3px;"></div>
<div style="position:absolute;left:136px;top:424px;width:15px;height:26px;background-image:radial-gradient(rgba(115,191,105,0.95) 10%, rgba(115,191,105,0.55));border-radius:3px;"></div>
<div style="position:absolute;left:154px;top:424px;width:15px;height:26px;background-image:radial-gradient(rgba(115,191,105,0.95) 10%, rgba(115,191,105,0.55));border-radius:3px;"></div>
<div style="position:absolute;left:172px;top:424px;width:15px;height:26px;background-image:radial-gradient(rgba(115,191,105,0.95) 10%, rgba(115,191,105,0.55));border-radius:3px;"></div>
<div style="position:absolute;left:190px;top:424px;width:15px;height:26px;background-image:radial-gradient(rgba(115,191,105,0.95) 10%, rgba(115,191,105,0.55));border-radius:3px;"></div>
<div style="position:absolute;left:208px;top:424px;width:15px;height:26px;background-image:radial-gradient(rgba(115,191,105,0.95) 10%, rgba(115,191,105,0.55));border-radius:3px;"></div>
<div style="position:absolute;left:226px;top:424px;width:15px;height:26px;background-image:radial-gradient(rgba(115,191,105,0.95) 10%, rgba(115,191,105,0.55));border-radius:3px;"></div>
<div style="position:absolute;left:244px;top:424px;width:15px;height:26px;background-image:radial-gradient(rgba(115,191,105,0.95) 10%, rgba(115,191,105,0.55));border-radius:3px;"></div>
<div style="position:absolute;left:262px;top:424px;width:15px;height:26px;background-image:radial-gradient(rgba(115,191,105,0.95) 10%, rgba(115,191,105,0.55));border-radius:3px;"></div>
<div style="position:absolute;left:280px;top:424px;width:15px;height:26px;background-image:radial-gradient(rgba(115,191,105,0.95) 10%, rgba(115,191,105,0.55));border-radius:3px;"></div>
<div style="position:absolute;left:298px;top:424px;width:15px;height:26px;background-image:radial-gradient(rgba(115,191,105,0.95) 10%, rgba(115,191,105,0.55));border-radius:3px;"></div>
<div style="position:absolute;left:316px;top:424px;width:15px;height:26px;background-image:radial-gradient(rgba(115,191,105,0.95) 10%, rgba(115,191,105,0.55));border-radius:3px;"></div>
<div style="position:absolute;left:334px;top:424px;width:15px;height:26px;background-image:radial-gradient(rgba(115,191,105,0.95) 10%, rgba(115,191,105,0.55));border-radius:3px;"></div>
<div style="position:absolute;left:352px;top:424px;width:15px;height:26px;background-image:radial-gradient(rgba(115,191,105,0.95) 10%, rgba(115,191,105,0.55));border-radius:3px;"></div>
<div style="position:absolute;left:370px;top:424px;width:15px;height:26px;background-image:radial-gradient(rgba(115,191,105,0.95) 10%, rgba(115,191,105,0.55));border-radius:3px;"></div>
<div style="position:absolute;left:388px;top:424px;width:15px;height:26px;background-image:radial-gradient(rgba(115,191,105,0.95) 10%, rgba(115,191,105,0.55));border-radius:3px;"></div>
<div style="position:absolute;left:406px;top:424px;width:15px;height:26px;background-image:radial-gradient(rgba(115,191,105,0.95) 10%, rgba(115,191,105,0.55));border-radius:3px;"></div>
<div style="position:absolute;left:424px;top:424px;width:15px;height:26px;background-image:radial-gradient(rgba(115,191,105,0.95) 10%, rgba(115,191,105,0.55));border-radius:3px;"></div>
<div style="position:absolute;left:442px;top:424px;width:15px;height:26px;background-image:radial-gradient(rgba(115,191,105,0.95) 10%, rgba(115,191,105,0.55));border-radius:3px;"></div>
<div class="t" style="left:476px;top:427.20px;font-size:18px;line-height:18px;color:#73bf69;font-weight:400;">Plugged-In</div>
<div class="t" style="left:-915px;width:1000px;text-align:right;top:455.80px;font-size:18px;line-height:18px;color:#ccccdc;font-weight:400;">ether2</div>
<div style="position:absolute;left:100px;top:452px;width:15px;height:26px;background-color:rgba(115,191,105,0.18);border-radius:3px;"></div>
<div style="position:absolute;left:118px;top:452px;width:15px;height:26px;background-color:rgba(115,191,105,0.18);border-radius:3px;"></div>
<div style="position:absolute;left:136px;top:452px;width:15px;height:26px;background-color:rgba(115,191,105,0.18);border-radius:3px;"></div>
<div style="position:absolute;left:154px;top:452px;width:15px;height:26px;background-color:rgba(115,191,105,0.18);border-radius:3px;"></div>
<div style="position:absolute;left:172px;top:452px;width:15px;height:26px;background-color:rgba(115,191,105,0.18);border-radius:3px;"></div>
<div style="position:absolute;left:190px;top:452px;width:15px;height:26px;background-color:rgba(115,191,105,0.18);border-radius:3px;"></div>
<div style="position:absolute;left:208px;top:452px;width:15px;height:26px;background-color:rgba(115,191,105,0.18);border-radius:3px;"></div>
<div style="position:absolute;left:226px;top:452px;width:15px;height:26px;background-color:rgba(115,191,105,0.18);border-radius:3px;"></div>
<div style="position:absolute;left:244px;top:452px;width:15px;height:26px;background-color:rgba(115,191,105,0.18);border-radius:3px;"></div>
<div style="position:absolute;left:262px;top:452px;width:15px;height:26px;background-color:rgba(115,191,105,0.18);border-radius:3px;"></div>
<div style="position:absolute;left:280px;top:452px;width:15px;height:26px;background-color:rgba(115,191,105,0.18);border-radius:3px;"></div>
<div style="position:absolute;left:298px;top:452px;width:15px;height:26px;background-color:rgba(115,191,105,0.18);border-radius:3px;"></div>
<div style="position:absolute;left:316px;top:452px;width:15px;height:26px;background-color:rgba(115,191,105,0.18);border-radius:3px;"></div>
<div style="position:absolute;left:334px;top:452px;width:15px;height:26px;background-color:rgba(115,191,105,0.18);border-radius:3px;"></div>
<div style="position:absolute;left:352px;top:452px;width:15px;height:26px;background-color:rgba(115,191,105,0.18);border-radius:3px;"></div>
<div style="position:absolute;left:370px;top:452px;width:15px;height:26px;background-color:rgba(115,191,105,0.18);border-radius:3px;"></div>
<div style="position:absolute;left:388px;top:452px;width:15px;height:26px;background-color:rgba(115,191,105,0.18);border-radius:3px;"></div>
<div style="position:absolute;left:406px;top:452px;width:15px;height:26px;background-color:rgba(115,191,105,0.18);border-radius:3px;"></div>
<div style="position:absolute;left:424px;top:452px;width:15px;height:26px;background-color:rgba(115,191,105,0.18);border-radius:3px;"></div>
<div style="position:absolute;left:442px;top:452px;width:15px;height:26px;background-color:rgba(115,191,105,0.18);border-radius:3px;"></div>
<div class="t" style="left:476px;top:455.80px;font-size:18px;line-height:18px;color:#fade2a;font-weight:400;">Unplugged</div>
<div class="t" style="left:-915px;width:1000px;text-align:right;top:484.40px;font-size:18px;line-height:18px;color:#ccccdc;font-weight:400;">ether3</div>
<div style="position:absolute;left:100px;top:481px;width:15px;height:26px;background-color:rgba(115,191,105,0.18);border-radius:3px;"></div>
<div style="position:absolute;left:118px;top:481px;width:15px;height:26px;background-color:rgba(115,191,105,0.18);border-radius:3px;"></div>
<div style="position:absolute;left:136px;top:481px;width:15px;height:26px;background-color:rgba(115,191,105,0.18);border-radius:3px;"></div>
<div style="position:absolute;left:154px;top:481px;width:15px;height:26px;background-color:rgba(115,191,105,0.18);border-radius:3px;"></div>
<div style="position:absolute;left:172px;top:481px;width:15px;height:26px;background-color:rgba(115,191,105,0.18);border-radius:3px;"></div>
<div style="position:absolute;left:190px;top:481px;width:15px;height:26px;background-color:rgba(115,191,105,0.18);border-radius:3px;"></div>
<div style="position:absolute;left:208px;top:481px;width:15px;height:26px;background-color:rgba(115,191,105,0.18);border-radius:3px;"></div>
<div style="position:absolute;left:226px;top:481px;width:15px;height:26px;background-color:rgba(115,191,105,0.18);border-radius:3px;"></div>
<div style="position:absolute;left:244px;top:481px;width:15px;height:26px;background-color:rgba(115,191,105,0.18);border-radius:3px;"></div>
<div style="position:absolute;left:262px;top:481px;width:15px;height:26px;background-color:rgba(115,191,105,0.18);border-radius:3px;"></div>
<div style="position:absolute;left:280px;top:481px;width:15px;height:26px;background-color:rgba(115,191,105,0.18);border-radius:3px;"></div>
<div style="position:absolute;left:298px;top:481px;width:15px;height:26px;background-color:rgba(115,191,105,0.18);border-radius:3px;"></div>
<div style="position:absolute;left:316px;top:481px;width:15px;height:26px;background-color:rgba(115,191,105,0.18);border-radius:3px;"></div>
<div style="position:absolute;left:334px;top:481px;width:15px;height:26px;background-color:rgba(115,191,105,0.18);border-radius:3px;"></div>
<div style="position:absolute;left:352px;top:481px;width:15px;height:26px;background-color:rgba(115,191,105,0.18);border-radius:3px;"></div>
<div style="position:absolute;left:370px;top:481px;width:15px;height:26px;background-color:rgba(115,191,105,0.18);border-radius:3px;"></div>
<div style="position:absolute;left:388px;top:481px;width:15px;height:26px;background-color:rgba(115,191,105,0.18);border-radius:3px;"></div>
<div style="position:absolute;left:406px;top:481px;width:15px;height:26px;background-color:rgba(115,191,105,0.18);border-radius:3px;"></div>
<div style="position:absolute;left:424px;top:481px;width:15px;height:26px;background-color:rgba(115,191,105,0.18);border-radius:3px;"></div>
<div style="position:absolute;left:442px;top:481px;width:15px;height:26px;background-color:rgba(115,191,105,0.18);border-radius:3px;"></div>
<div class="t" style="left:476px;top:484.40px;font-size:18px;line-height:18px;color:#fade2a;font-weight:400;">Unplugged</div>
<div class="t" style="left:-915px;width:1000px;text-align:right;top:513.00px;font-size:18px;line-height:18px;color:#ccccdc;font-weight:400;">ether4</div>
<div style="position:absolute;left:100px;top:509px;width:15px;height:26px;background-color:rgba(115,191,105,0.18);border-radius:3px;"></div>
<div style="position:absolute;left:118px;top:509px;width:15px;height:26px;background-color:rgba(115,191,105,0.18);border-radius:3px;"></div>
<div style="position:absolute;left:136px;top:509px;width:15px;height:26px;background-color:rgba(115,191,105,0.18);border-radius:3px;"></div>
<div style="position:absolute;left:154px;top:509px;width:15px;height:26px;background-color:rgba(115,191,105,0.18);border-radius:3px;"></div>
<div style="position:absolute;left:172px;top:509px;width:15px;height:26px;background-color:rgba(115,191,105,0.18);border-radius:3px;"></div>
<div style="position:absolute;left:190px;top:509px;width:15px;height:26px;background-color:rgba(115,191,105,0.18);border-radius:3px;"></div>
<div style="position:absolute;left:208px;top:509px;width:15px;height:26px;background-color:rgba(115,191,105,0.18);border-radius:3px;"></div>
<div style="position:absolute;left:226px;top:509px;width:15px;height:26px;background-color:rgba(115,191,105,0.18);border-radius:3px;"></div>
<div style="position:absolute;left:244px;top:509px;width:15px;height:26px;background-color:rgba(115,191,105,0.18);border-radius:3px;"></div>
<div style="position:absolute;left:262px;top:509px;width:15px;height:26px;background-color:rgba(115,191,105,0.18);border-radius:3px;"></div>
<div style="position:absolute;left:280px;top:509px;width:15px;height:26px;background-color:rgba(115,191,105,0.18);border-radius:3px;"></div>
<div style="position:absolute;left:298px;top:509px;width:15px;height:26px;background-color:rgba(115,191,105,0.18);border-radius:3px;"></div>
<div style="position:absolute;left:316px;top:509px;width:15px;height:26px;background-color:rgba(115,191,105,0.18);border-radius:3px;"></div>
<div style="position:absolute;left:334px;top:509px;width:15px;height:26px;background-color:rgba(115,191,105,0.18);border-radius:3px;"></div>
<div style="position:absolute;left:352px;top:509px;width:15px;height:26px;background-color:rgba(115,191,105,0.18);border-radius:3px;"></div>
<div style="position:absolute;left:370px;top:509px;width:15px;height:26px;background-color:rgba(115,191,105,0.18);border-radius:3px;"></div>
<div style="position:absolute;left:388px;top:509px;width:15px;height:26px;background-color:rgba(115,191,105,0.18);border-radius:3px;"></div>
<div style="position:absolute;left:406px;top:509px;width:15px;height:26px;background-color:rgba(115,191,105,0.18);border-radius:3px;"></div>
<div style="position:absolute;left:424px;top:509px;width:15px;height:26px;background-color:rgba(115,191,105,0.18);border-radius:3px;"></div>
<div style="position:absolute;left:442px;top:509px;width:15px;height:26px;background-color:rgba(115,191,105,0.18);border-radius:3px;"></div>
<div class="t" style="left:476px;top:513.00px;font-size:18px;line-height:18px;color:#fade2a;font-weight:400;">Unplugged</div>
<div class="t" style="left:-915px;width:1000px;text-align:right;top:541.60px;font-size:18px;line-height:18px;color:#ccccdc;font-weight:400;">ether5</div>
<div style="position:absolute;left:100px;top:538px;width:15px;height:26px;background-color:rgba(115,191,105,0.18);border-radius:3px;"></div>
<div style="position:absolute;left:118px;top:538px;width:15px;height:26px;background-color:rgba(115,191,105,0.18);border-radius:3px;"></div>
<div style="position:absolute;left:136px;top:538px;width:15px;height:26px;background-color:rgba(115,191,105,0.18);border-radius:3px;"></div>
<div style="position:absolute;left:154px;top:538px;width:15px;height:26px;background-color:rgba(115,191,105,0.18);border-radius:3px;"></div>
<div style="position:absolute;left:172px;top:538px;width:15px;height:26px;background-color:rgba(115,191,105,0.18);border-radius:3px;"></div>
<div style="position:absolute;left:190px;top:538px;width:15px;height:26px;background-color:rgba(115,191,105,0.18);border-radius:3px;"></div>
<div style="position:absolute;left:208px;top:538px;width:15px;height:26px;background-color:rgba(115,191,105,0.18);border-radius:3px;"></div>
<div style="position:absolute;left:226px;top:538px;width:15px;height:26px;background-color:rgba(115,191,105,0.18);border-radius:3px;"></div>
<div style="position:absolute;left:244px;top:538px;width:15px;height:26px;background-color:rgba(115,191,105,0.18);border-radius:3px;"></div>
<div style="position:absolute;left:262px;top:538px;width:15px;height:26px;background-color:rgba(115,191,105,0.18);border-radius:3px;"></div>
<div style="position:absolute;left:280px;top:538px;width:15px;height:26px;background-color:rgba(115,191,105,0.18);border-radius:3px;"></div>
<div style="position:absolute;left:298px;top:538px;width:15px;height:26px;background-color:rgba(115,191,105,0.18);border-radius:3px;"></div>
<div style="position:absolute;left:316px;top:538px;width:15px;height:26px;background-color:rgba(115,191,105,0.18);border-radius:3px;"></div>
<div style="position:absolute;left:334px;top:538px;width:15px;height:26px;background-color:rgba(115,191,105,0.18);border-radius:3px;"></div>
<div style="position:absolute;left:352px;top:538px;width:15px;height:26px;background-color:rgba(115,191,105,0.18);border-radius:3px;"></div>
<div style="position:absolute;left:370px;top:538px;width:15px;height:26px;background-color:rgba(115,191,105,0.18);border-radius:3px;"></div>
<div style="position:absolute;left:388px;top:538px;width:15px;height:26px;background-color:rgba(115,191,105,0.18);border-radius:3px;"></div>
<div style="position:absolute;left:406px;top:538px;width:15px;height:26px;background-color:rgba(115,191,105,0.18);border-radius:3px;"></div>
<div style="position:absolute;left:424px;top:538px;width:15px;height:26px;background-color:rgba(115,191,105,0.18);border-radius:3px;"></div>
<div style="position:absolute;left:442px;top:538px;width:15px;height:26px;background-color:rgba(115,191,105,0.18);border-radius:3px;"></div>
<div class="t" style="left:476px;top:541.60px;font-size:18px;line-height:18px;color:#fade2a;font-weight:400;">Unplugged</div>
<div class="t" style="left:-915px;width:1000px;text-align:right;top:570.20px;font-size:18px;line-height:18px;color:#ccccdc;font-weight:400;">ether6</div>
<div style="position:absolute;left:100px;top:567px;width:15px;height:26px;background-color:rgba(115,191,105,0.18);border-radius:3px;"></div>
<div style="position:absolute;left:118px;top:567px;width:15px;height:26px;background-color:rgba(115,191,105,0.18);border-radius:3px;"></div>
<div style="position:absolute;left:136px;top:567px;width:15px;height:26px;background-color:rgba(115,191,105,0.18);border-radius:3px;"></div>
<div style="position:absolute;left:154px;top:567px;width:15px;height:26px;background-color:rgba(115,191,105,0.18);border-radius:3px;"></div>
<div style="position:absolute;left:172px;top:567px;width:15px;height:26px;background-color:rgba(115,191,105,0.18);border-radius:3px;"></div>
<div style="position:absolute;left:190px;top:567px;width:15px;height:26px;background-color:rgba(115,191,105,0.18);border-radius:3px;"></div>
<div style="position:absolute;left:208px;top:567px;width:15px;height:26px;background-color:rgba(115,191,105,0.18);border-radius:3px;"></div>
<div style="position:absolute;left:226px;top:567px;width:15px;height:26px;background-color:rgba(115,191,105,0.18);border-radius:3px;"></div>
<div style="position:absolute;left:244px;top:567px;width:15px;height:26px;background-color:rgba(115,191,105,0.18);border-radius:3px;"></div>
<div style="position:absolute;left:262px;top:567px;width:15px;height:26px;background-color:rgba(115,191,105,0.18);border-radius:3px;"></div>
<div style="position:absolute;left:280px;top:567px;width:15px;height:26px;background-color:rgba(115,191,105,0.18);border-radius:3px;"></div>
<div style="position:absolute;left:298px;top:567px;width:15px;height:26px;background-color:rgba(115,191,105,0.18);border-radius:3px;"></div>
<div style="position:absolute;left:316px;top:567px;width:15px;height:26px;background-color:rgba(115,191,105,0.18);border-radius:3px;"></div>
<div style="position:absolute;left:334px;top:567px;width:15px;height:26px;background-color:rgba(115,191,105,0.18);border-radius:3px;"></div>
<div style="position:absolute;left:352px;top:567px;width:15px;height:26px;background-color:rgba(115,191,105,0.18);border-radius:3px;"></div>
<div style="position:absolute;left:370px;top:567px;width:15px;height:26px;background-color:rgba(115,191,105,0.18);border-radius:3px;"></div>
<div style="position:absolute;left:388px;top:567px;width:15px;height:26px;background-color:rgba(115,191,105,0.18);border-radius:3px;"></div>
<div style="position:absolute;left:406px;top:567px;width:15px;height:26px;background-color:rgba(115,191,105,0.18);border-radius:3px;"></div>
<div style="position:absolute;left:424px;top:567px;width:15px;height:26px;background-color:rgba(115,191,105,0.18);border-radius:3px;"></div>
<div style="position:absolute;left:442px;top:567px;width:15px;height:26px;background-color:rgba(115,191,105,0.18);border-radius:3px;"></div>
<div class="t" style="left:476px;top:570.20px;font-size:18px;line-height:18px;color:#fade2a;font-weight:400;">Unplugged</div>
<div class="t" style="left:-915px;width:1000px;text-align:right;top:598.80px;font-size:18px;line-height:18px;color:#ccccdc;font-weight:400;">ether7</div>
<div style="position:absolute;left:100px;top:595px;width:15px;height:26px;background-color:rgba(115,191,105,0.18);border-radius:3px;"></div>
<div style="position:absolute;left:118px;top:595px;width:15px;height:26px;background-color:rgba(115,191,105,0.18);border-radius:3px;"></div>
<div style="position:absolute;left:136px;top:595px;width:15px;height:26px;background-color:rgba(115,191,105,0.18);border-radius:3px;"></div>
<div style="position:absolute;left:154px;top:595px;width:15px;height:26px;background-color:rgba(115,191,105,0.18);border-radius:3px;"></div>
<div style="position:absolute;left:172px;top:595px;width:15px;height:26px;background-color:rgba(115,191,105,0.18);border-radius:3px;"></div>
<div style="position:absolute;left:190px;top:595px;width:15px;height:26px;background-color:rgba(115,191,105,0.18);border-radius:3px;"></div>
<div style="position:absolute;left:208px;top:595px;width:15px;height:26px;background-color:rgba(115,191,105,0.18);border-radius:3px;"></div>
<div style="position:absolute;left:226px;top:595px;width:15px;height:26px;background-color:rgba(115,191,105,0.18);border-radius:3px;"></div>
<div style="position:absolute;left:244px;top:595px;width:15px;height:26px;background-color:rgba(115,191,105,0.18);border-radius:3px;"></div>
<div style="position:absolute;left:262px;top:595px;width:15px;height:26px;background-color:rgba(115,191,105,0.18);border-radius:3px;"></div>
<div style="position:absolute;left:280px;top:595px;width:15px;height:26px;background-color:rgba(115,191,105,0.18);border-radius:3px;"></div>
<div style="position:absolute;left:298px;top:595px;width:15px;height:26px;background-color:rgba(115,191,105,0.18);border-radius:3px;"></div>
<div style="position:absolute;left:316px;top:595px;width:15px;height:26px;background-color:rgba(115,191,105,0.18);border-radius:3px;"></div>
<div style="position:absolute;left:334px;top:595px;width:15px;height:26px;background-color:rgba(115,191,105,0.18);border-radius:3px;"></div>
<div style="position:absolute;left:352px;top:595px;width:15px;height:26px;background-color:rgba(115,191,105,0.18);border-radius:3px;"></div>
<div style="position:absolute;left:370px;top:595px;width:15px;height:26px;background-color:rgba(115,191,105,0.18);border-radius:3px;"></div>
<div style="position:absolute;left:388px;top:595px;width:15px;height:26px;background-color:rgba(115,191,105,0.18);border-radius:3px;"></div>
<div style="position:absolute;left:406px;top:595px;width:15px;height:26px;background-color:rgba(115,191,105,0.18);border-radius:3px;"></div>
<div style="position:absolute;left:424px;top:595px;width:15px;height:26px;background-color:rgba(115,191,105,0.18);border-radius:3px;"></div>
<div style="position:absolute;left:442px;top:595px;width:15px;height:26px;background-color:rgba(115,191,105,0.18);border-radius:3px;"></div>
<div class="t" style="left:476px;top:598.80px;font-size:18px;line-height:18px;color:#fade2a;font-weight:400;">Unplugged</div>
<div class="t" style="left:-915px;width:1000px;text-align:right;top:627.40px;font-size:18px;line-height:18px;color:#ccccdc;font-weight:400;">ether8</div>
<div style="position:absolute;left:100px;top:624px;width:15px;height:26px;background-image:radial-gradient(rgba(115,191,105,0.95) 10%, rgba(115,191,105,0.55));border-radius:3px;"></div>
<div style="position:absolute;left:118px;top:624px;width:15px;height:26px;background-image:radial-gradient(rgba(115,191,105,0.95) 10%, rgba(115,191,105,0.55));border-radius:3px;"></div>
<div style="position:absolute;left:136px;top:624px;width:15px;height:26px;background-image:radial-gradient(rgba(115,191,105,0.95) 10%, rgba(115,191,105,0.55));border-radius:3px;"></div>
<div style="position:absolute;left:154px;top:624px;width:15px;height:26px;background-image:radial-gradient(rgba(115,191,105,0.95) 10%, rgba(115,191,105,0.55));border-radius:3px;"></div>
<div style="position:absolute;left:172px;top:624px;width:15px;height:26px;background-image:radial-gradient(rgba(115,191,105,0.95) 10%, rgba(115,191,105,0.55));border-radius:3px;"></div>
<div style="position:absolute;left:190px;top:624px;width:15px;height:26px;background-image:radial-gradient(rgba(115,191,105,0.95) 10%, rgba(115,191,105,0.55));border-radius:3px;"></div>
<div style="position:absolute;left:208px;top:624px;width:15px;height:26px;background-image:radial-gradient(rgba(115,191,105,0.95) 10%, rgba(115,191,105,0.55));border-radius:3px;"></div>
<div style="position:absolute;left:226px;top:624px;width:15px;height:26px;background-image:radial-gradient(rgba(115,191,105,0.95) 10%, rgba(115,191,105,0.55));border-radius:3px;"></div>
<div style="position:absolute;left:244px;top:624px;width:15px;height:26px;background-image:radial-gradient(rgba(115,191,105,0.95) 10%, rgba(115,191,105,0.55));border-radius:3px;"></div>
<div style="position:absolute;left:262px;top:624px;width:15px;height:26px;background-image:radial-gradient(rgba(115,191,105,0.95) 10%, rgba(115,191,105,0.55));border-radius:3px;"></div>
<div style="position:absolute;left:280px;top:624px;width:15px;height:26px;background-image:radial-gradient(rgba(115,191,105,0.95) 10%, rgba(115,191,105,0.55));border-radius:3px;"></div>
<div style="position:absolute;left:298px;top:624px;width:15px;height:26px;background-image:radial-gradient(rgba(115,191,105,0.95) 10%, rgba(115,191,105,0.55));border-radius:3px;"></div>
<div style="position:absolute;left:316px;top:624px;width:15px;height:26px;background-image:radial-gradient(rgba(115,191,105,0.95) 10%, rgba(115,191,105,0.55));border-radius:3px;"></div>
<div style="position:absolute;left:334px;top:624px;width:15px;height:26px;background-image:radial-gradient(rgba(115,191,105,0.95) 10%, rgba(115,191,105,0.55));border-radius:3px;"></div>
<div style="position:absolute;left:352px;top:624px;width:15px;height:26px;background-image:radial-gradient(rgba(115,191,105,0.95) 10%, rgba(115,191,105,0.55));border-radius:3px;"></div>
<div style="position:absolute;left:370px;top:624px;width:15px;height:26px;background-image:radial-gradient(rgba(115,191,105,0.95) 10%, rgba(115,191,105,0.55));border-radius:3px;"></div>
<div style="position:absolute;left:388px;top:624px;width:15px;height:26px;background-image:radial-gradient(rgba(115,191,105,0.95) 10%, rgba(115,191,105,0.55));border-radius:3px;"></div>
<div style="position:absolute;left:406px;top:624px;width:15px;height:26px;background-image:radial-gradient(rgba(115,191,105,0.95) 10%, rgba(115,191,105,0.55));border-radius:3px;"></div>
<div style="position:absolute;left:424px;top:624px;width:15px;height:26px;background-image:radial-gradient(rgba(115,191,105,0.95) 10%, rgba(115,191,105,0.55));border-radius:3px;"></div>
<div style="position:absolute;left:442px;top:624px;width:15px;height:26px;background-image:radial-gradient(rgba(115,191,105,0.95) 10%, rgba(115,191,105,0.55));border-radius:3px;"></div>
<div class="t" style="left:476px;top:627.40px;font-size:18px;line-height:18px;color:#73bf69;font-weight:400;">Plugged-In</div>
<div class="t" style="left:-915px;width:1000px;text-align:right;top:656.00px;font-size:18px;line-height:18px;color:#ccccdc;font-weight:400;">ether9</div>
<div style="position:absolute;left:100px;top:652px;width:15px;height:26px;background-color:rgba(115,191,105,0.18);border-radius:3px;"></div>
<div style="position:absolute;left:118px;top:652px;width:15px;height:26px;background-color:rgba(115,191,105,0.18);border-radius:3px;"></div>
<div style="position:absolute;left:136px;top:652px;width:15px;height:26px;background-color:rgba(115,191,105,0.18);border-radius:3px;"></div>
<div style="position:absolute;left:154px;top:652px;width:15px;height:26px;background-color:rgba(115,191,105,0.18);border-radius:3px;"></div>
<div style="position:absolute;left:172px;top:652px;width:15px;height:26px;background-color:rgba(115,191,105,0.18);border-radius:3px;"></div>
<div style="position:absolute;left:190px;top:652px;width:15px;height:26px;background-color:rgba(115,191,105,0.18);border-radius:3px;"></div>
<div style="position:absolute;left:208px;top:652px;width:15px;height:26px;background-color:rgba(115,191,105,0.18);border-radius:3px;"></div>
<div style="position:absolute;left:226px;top:652px;width:15px;height:26px;background-color:rgba(115,191,105,0.18);border-radius:3px;"></div>
<div style="position:absolute;left:244px;top:652px;width:15px;height:26px;background-color:rgba(115,191,105,0.18);border-radius:3px;"></div>
<div style="position:absolute;left:262px;top:652px;width:15px;height:26px;background-color:rgba(115,191,105,0.18);border-radius:3px;"></div>
<div style="position:absolute;left:280px;top:652px;width:15px;height:26px;background-color:rgba(115,191,105,0.18);border-radius:3px;"></div>
<div style="position:absolute;left:298px;top:652px;width:15px;height:26px;background-color:rgba(115,191,105,0.18);border-radius:3px;"></div>
<div style="position:absolute;left:316px;top:652px;width:15px;height:26px;background-color:rgba(115,191,105,0.18);border-radius:3px;"></div>
<div style="position:absolute;left:334px;top:652px;width:15px;height:26px;background-color:rgba(115,191,105,0.18);border-radius:3px;"></div>
<div style="position:absolute;left:352px;top:652px;width:15px;height:26px;background-color:rgba(115,191,105,0.18);border-radius:3px;"></div>
<div style="position:absolute;left:370px;top:652px;width:15px;height:26px;background-color:rgba(115,191,105,0.18);border-radius:3px;"></div>
<div style="position:absolute;left:388px;top:652px;width:15px;height:26px;background-color:rgba(115,191,105,0.18);border-radius:3px;"></div>
<div style="position:absolute;left:406px;top:652px;width:15px;height:26px;background-color:rgba(115,191,105,0.18);border-radius:3px;"></div>
<div style="position:absolute;left:424px;top:652px;width:15px;height:26px;background-color:rgba(115,191,105,0.18);border-radius:3px;"></div>
<div style="position:absolute;left:442px;top:652px;width:15px;height:26px;background-color:rgba(115,191,105,0.18);border-radius:3px;"></div>
<div class="t" style="left:476px;top:656.00px;font-size:18px;line-height:18px;color:#fade2a;font-weight:400;">Unplugged</div>
<div class="t" style="left:-915px;width:1000px;text-align:right;top:684.60px;font-size:18px;line-height:18px;color:#ccccdc;font-weight:400;">sfp1</div>
<div style="position:absolute;left:100px;top:681px;width:15px;height:26px;background-image:radial-gradient(rgba(115,191,105,0.95) 10%, rgba(115,191,105,0.55));border-radius:3px;"></div>
<div style="position:absolute;left:118px;top:681px;width:15px;height:26px;background-image:radial-gradient(rgba(115,191,105,0.95) 10%, rgba(115,191,105,0.55));border-radius:3px;"></div>
<div style="position:absolute;left:136px;top:681px;width:15px;height:26px;background-image:radial-gradient(rgba(115,191,105,0.95) 10%, rgba(115,191,105,0.55));border-radius:3px;"></div>
<div style="position:absolute;left:154px;top:681px;width:15px;height:26px;background-image:radial-gradient(rgba(115,191,105,0.95) 10%, rgba(115,191,105,0.55));border-radius:3px;"></div>
<div style="position:absolute;left:172px;top:681px;width:15px;height:26px;background-image:radial-gradient(rgba(115,191,105,0.95) 10%, rgba(115,191,105,0.55));border-radius:3px;"></div>
<div style="position:absolute;left:190px;top:681px;width:15px;height:26px;background-image:radial-gradient(rgba(115,191,105,0.95) 10%, rgba(115,191,105,0.55));border-radius:3px;"></div>
<div style="position:absolute;left:208px;top:681px;width:15px;height:26px;background-image:radial-gradient(rgba(115,191,105,0.95) 10%, rgba(115,191,105,0.55));border-radius:3px;"></div>
<div style="position:absolute;left:226px;top:681px;width:15px;height:26px;background-image:radial-gradient(rgba(115,191,105,0.95) 10%, rgba(115,191,105,0.55));border-radius:3px;"></div>
<div style="position:absolute;left:244px;top:681px;width:15px;height:26px;background-image:radial-gradient(rgba(115,191,105,0.95) 10%, rgba(115,191,105,0.55));border-radius:3px;"></div>
<div style="position:absolute;left:262px;top:681px;width:15px;height:26px;background-image:radial-gradient(rgba(115,191,105,0.95) 10%, rgba(115,191,105,0.55));border-radius:3px;"></div>
<div style="position:absolute;left:280px;top:681px;width:15px;height:26px;background-image:radial-gradient(rgba(115,191,105,0.95) 10%, rgba(115,191,105,0.55));border-radius:3px;"></div>
<div style="position:absolute;left:298px;top:681px;width:15px;height:26px;background-image:radial-gradient(rgba(115,191,105,0.95) 10%, rgba(115,191,105,0.55));border-radius:3px;"></div>
<div style="position:absolute;left:316px;top:681px;width:15px;height:26px;background-image:radial-gradient(rgba(115,191,105,0.95) 10%, rgba(115,191,105,0.55));border-radius:3px;"></div>
<div style="position:absolute;left:334px;top:681px;width:15px;height:26px;background-image:radial-gradient(rgba(115,191,105,0.95) 10%, rgba(115,191,105,0.55));border-radius:3px;"></div>
<div style="position:absolute;left:352px;top:681px;width:15px;height:26px;background-image:radial-gradient(rgba(115,191,105,0.95) 10%, rgba(115,191,105,0.55));border-radius:3px;"></div>
<div style="position:absolute;left:370px;top:681px;width:15px;height:26px;background-image:radial-gradient(rgba(115,191,105,0.95) 10%, rgba(115,191,105,0.55));border-radius:3px;"></div>
<div style="position:absolute;left:388px;top:681px;width:15px;height:26px;background-image:radial-gradient(rgba(115,191,105,0.95) 10%, rgba(115,191,105,0.55));border-radius:3px;"></div>
<div style="position:absolute;left:406px;top:681px;width:15px;height:26px;background-image:radial-gradient(rgba(115,191,105,0.95) 10%, rgba(115,191,105,0.55));border-radius:3px;"></div>
<div style="position:absolute;left:424px;top:681px;width:15px;height:26px;background-image:radial-gradient(rgba(115,191,105,0.95) 10%, rgba(115,191,105,0.55));border-radius:3px;"></div>
<div style="position:absolute;left:442px;top:681px;width:15px;height:26px;background-image:radial-gradient(rgba(115,191,105,0.95) 10%, rgba(115,191,105,0.55));border-radius:3px;"></div>
<div class="t" style="left:476px;top:684.60px;font-size:18px;line-height:18px;color:#73bf69;font-weight:400;">Plugged-In</div>
<div style="position:absolute;left:620px;top:383px;width:600px;height:51px;background:#22252b;"></div>
<div style="position:absolute;left:919px;top:383px;width:1px;height:265px;background:rgba(204,204,220,0.07);"></div>
<div class="t" style="left:629px;top:398.15px;font-size:21px;line-height:21px;color:#6e9fff;font-weight:400;letter-spacing:0.3px;">Interface</div>
<div class="t" style="left:204px;width:1000px;text-align:right;top:398.15px;font-size:21px;line-height:21px;color:#6e9fff;font-weight:400;">Rate</div>
<div class="t" style="left:629px;top:449.15px;font-size:21px;line-height:21px;color:#ccccdc;font-weight:400;">ether1</div>
<div class="t" style="left:210px;width:1000px;text-align:right;top:449.15px;font-size:21px;line-height:21px;color:#ccccdc;font-weight:400;">1 Gb/s</div>
<div style="position:absolute;left:620px;top:487px;width:600px;height:1px;background:rgba(204,204,220,0.07);"></div>
<div class="t" style="left:629px;top:503.15px;font-size:21px;line-height:21px;color:#ccccdc;font-weight:400;">ether10</div>
<div class="t" style="left:210px;width:1000px;text-align:right;top:503.15px;font-size:21px;line-height:21px;color:#ccccdc;font-weight:400;">1 Gb/s</div>
<div style="position:absolute;left:620px;top:541px;width:600px;height:1px;background:rgba(204,204,220,0.07);"></div>
<div class="t" style="left:629px;top:557.15px;font-size:21px;line-height:21px;color:#ccccdc;font-weight:400;">ether8</div>
<div class="t" style="left:210px;width:1000px;text-align:right;top:557.15px;font-size:21px;line-height:21px;color:#ccccdc;font-weight:400;">1 Gb/s</div>
<div style="position:absolute;left:620px;top:595px;width:600px;height:1px;background:rgba(204,204,220,0.07);"></div>
<div class="t" style="left:629px;top:611.15px;font-size:21px;line-height:21px;color:#ccccdc;font-weight:400;">sfp1</div>
<div class="t" style="left:210px;width:1000px;text-align:right;top:611.15px;font-size:21px;line-height:21px;color:#ccccdc;font-weight:400;">1 Gb/s</div>
<div style="position:absolute;left:5px;top:782px;width:1216px;height:51px;background:#22252b;"></div>
<div style="position:absolute;left:307px;top:782px;width:1px;height:51px;background:rgba(204,204,220,0.07);"></div>
<div style="position:absolute;left:308px;top:833px;width:1px;height:53px;background:rgba(204,204,220,0.07);"></div>
<div style="position:absolute;left:611px;top:782px;width:1px;height:51px;background:rgba(204,204,220,0.07);"></div>
<div style="position:absolute;left:612px;top:833px;width:1px;height:53px;background:rgba(204,204,220,0.07);"></div>
<div style="position:absolute;left:915px;top:782px;width:1px;height:51px;background:rgba(204,204,220,0.07);"></div>
<div style="position:absolute;left:915px;top:833px;width:1px;height:53px;background:rgba(204,204,220,0.07);"></div>
<div class="t" style="left:-846.65px;width:2000px;text-align:center;top:797.15px;font-size:21px;line-height:21px;color:#6e9fff;font-weight:400;letter-spacing:0.3px;">Interface</div>
<div class="t" style="left:-849.7px;width:2000px;text-align:center;top:847.15px;font-size:21px;line-height:21px;color:#ccccdc;font-weight:400;">ether10</div>
<div class="t" style="left:-543.25px;width:2000px;text-align:center;top:797.15px;font-size:21px;line-height:21px;color:#6e9fff;font-weight:400;letter-spacing:0.3px;">State</div>
<div class="t" style="left:-546px;width:2000px;text-align:center;top:847.15px;font-size:21px;line-height:21px;color:#ccccdc;font-weight:400;">off</div>
<div class="t" style="left:-239.75px;width:2000px;text-align:center;top:797.15px;font-size:21px;line-height:21px;color:#6e9fff;font-weight:400;letter-spacing:0.3px;">Status</div>
<div class="t" style="left:-241.89999999999998px;width:2000px;text-align:center;top:847.15px;font-size:21px;line-height:21px;color:#ccccdc;font-weight:400;">disabled</div>
<div class="t" style="left:64.55000000000018px;width:2000px;text-align:center;top:797.15px;font-size:21px;line-height:21px;color:#6e9fff;font-weight:400;letter-spacing:0.3px;">Priority</div>
<div class="t" style="left:62.40000000000009px;width:2000px;text-align:center;top:847.15px;font-size:21px;line-height:21px;color:#ccccdc;font-weight:400;">10</div>
<svg style="position:absolute;left:0;top:0" width="2456" height="960"><line x1="1305" y1="125.8" x2="2042" y2="125.8" stroke="rgba(255,255,255,0.16)" stroke-width="1.5"/><line x1="1305" y1="222.5" x2="2042" y2="222.5" stroke="rgba(255,255,255,0.16)" stroke-width="1.5"/><line x1="1305" y1="319.3" x2="2042" y2="319.3" stroke="rgba(255,255,255,0.16)" stroke-width="1.5"/><line x1="1305" y1="416.0" x2="2042" y2="416.0" stroke="rgba(255,255,255,0.16)" stroke-width="1.5"/><line x1="1305" y1="512.8" x2="2042" y2="512.8" stroke="rgba(255,255,255,0.16)" stroke-width="1.5"/><line x1="1305" y1="609.5" x2="2042" y2="609.5" stroke="rgba(255,255,255,0.16)" stroke-width="1.5"/><line x1="1305" y1="706.2" x2="2042" y2="706.2" stroke="rgba(255,255,255,0.16)" stroke-width="1.5"/><line x1="1305" y1="803.0" x2="2042" y2="803.0" stroke="rgba(255,255,255,0.16)" stroke-width="1.5"/><line x1="1305" y1="899.7" x2="2042" y2="899.7" stroke="rgba(255,255,255,0.16)" stroke-width="1.5"/><line x1="1316.0" y1="125.8" x2="1316.0" y2="899.7" stroke="rgba(255,255,255,0.16)" stroke-width="1.5"/><line x1="1438.7" y1="125.8" x2="1438.7" y2="899.7" stroke="rgba(255,255,255,0.16)" stroke-width="1.5"/><line x1="1561.4" y1="125.8" x2="1561.4" y2="899.7" stroke="rgba(255,255,255,0.16)" stroke-width="1.5"/><line x1="1684.1" y1="125.8" x2="1684.1" y2="899.7" stroke="rgba(255,255,255,0.16)" stroke-width="1.5"/><line x1="1806.8" y1="125.8" x2="1806.8" y2="899.7" stroke="rgba(255,255,255,0.16)" stroke-width="1.5"/><line x1="1929.5" y1="125.8" x2="1929.5" y2="899.7" stroke="rgba(255,255,255,0.16)" stroke-width="1.5"/><line x1="1305" y1="512.5" x2="2042" y2="512.5" stroke="#f9ba8f" stroke-width="3"/></svg>
<div class="t" style="left:295px;width:1000px;text-align:right;top:116.70px;font-size:18px;line-height:18px;color:#ccccdc;font-weight:400;letter-spacing:-0.5px;">1</div>
<div class="t" style="left:295px;width:1000px;text-align:right;top:213.44px;font-size:18px;line-height:18px;color:#ccccdc;font-weight:400;letter-spacing:-0.5px;">0.750</div>
<div class="t" style="left:295px;width:1000px;text-align:right;top:310.18px;font-size:18px;line-height:18px;color:#ccccdc;font-weight:400;letter-spacing:-0.5px;">0.500</div>
<div class="t" style="left:295px;width:1000px;text-align:right;top:406.92px;font-size:18px;line-height:18px;color:#ccccdc;font-weight:400;letter-spacing:-0.5px;">0.250</div>
<div class="t" style="left:295px;width:1000px;text-align:right;top:503.66px;font-size:18px;line-height:18px;color:#ccccdc;font-weight:400;letter-spacing:-0.5px;">0</div>
<div class="t" style="left:295px;width:1000px;text-align:right;top:600.40px;font-size:18px;line-height:18px;color:#ccccdc;font-weight:400;letter-spacing:-0.5px;">-0.250</div>
<div class="t" style="left:295px;width:1000px;text-align:right;top:697.14px;font-size:18px;line-height:18px;color:#ccccdc;font-weight:400;letter-spacing:-0.5px;">-0.500</div>
<div class="t" style="left:295px;width:1000px;text-align:right;top:793.88px;font-size:18px;line-height:18px;color:#ccccdc;font-weight:400;letter-spacing:-0.5px;">-0.750</div>
<div class="t" style="left:295px;width:1000px;text-align:right;top:890.62px;font-size:18px;line-height:18px;color:#ccccdc;font-weight:400;letter-spacing:-0.5px;">-1</div>
<div class="t" style="left:316.0px;width:2000px;text-align:center;top:912.70px;font-size:18px;line-height:18px;color:#ccccdc;font-weight:400;">16:00</div>
<div class="t" style="left:438.70000000000005px;width:2000px;text-align:center;top:912.70px;font-size:18px;line-height:18px;color:#ccccdc;font-weight:400;">20:00</div>
<div class="t" style="left:561.4000000000001px;width:2000px;text-align:center;top:912.70px;font-size:18px;line-height:18px;color:#ccccdc;font-weight:400;">00:00</div>
<div class="t" style="left:684.0999999999999px;width:2000px;text-align:center;top:912.70px;font-size:18px;line-height:18px;color:#ccccdc;font-weight:400;">04:00</div>
<div class="t" style="left:806.8px;width:2000px;text-align:center;top:912.70px;font-size:18px;line-height:18px;color:#ccccdc;font-weight:400;">08:00</div>
<div class="t" style="left:929.5px;width:2000px;text-align:center;top:912.70px;font-size:18px;line-height:18px;color:#ccccdc;font-weight:400;">12:00</div>
<div class="t" style="left:1360px;width:1000px;text-align:right;top:123.70px;font-size:18px;line-height:18px;color:#33a2e5;font-weight:400;-webkit-text-stroke:0.5px #33a2e5;">avg</div>
<div class="t" style="left:1414.3000000000002px;width:1000px;text-align:right;top:123.70px;font-size:18px;line-height:18px;color:#33a2e5;font-weight:400;letter-spacing:0.8px;-webkit-text-stroke:0.5px #33a2e5;">total</div>
<div style="position:absolute;left:2060px;top:148px;width:380px;height:788px;overflow:hidden">
<div style="position:absolute;left:17px;top:19px;width:21px;height:6px;background:#7EB26D;border-radius:2px;"></div>
<div class="t" style="left:53px;top:11.90px;font-size:18px;line-height:18px;color:#ccccdc;font-weight:400;letter-spacing:-0.3px;">In Errors | BASE_VLAN</div>
<div class="t" style="left:-688.5px;width:1000px;text-align:right;top:11.90px;font-size:18px;line-height:18px;color:#ccccdc;font-weight:400;">0</div>
<div class="t" style="left:-634.3000000000002px;width:1000px;text-align:right;top:11.90px;font-size:18px;line-height:18px;color:#ccccdc;font-weight:400;">0</div>
<div style="position:absolute;left:14px;top:41px;width:356px;height:40px;background:#22252b;"></div>
<div style="position:absolute;left:17px;top:59px;width:21px;height:6px;background:#EAB839;border-radius:2px;"></div>
<div class="t" style="left:53px;top:52.18px;font-size:18px;line-height:18px;color:#ccccdc;font-weight:400;letter-spacing:-0.3px;">In Errors | FAMILY_VLAN</div>
<div class="t" style="left:-688.5px;width:1000px;text-align:right;top:52.18px;font-size:18px;line-height:18px;color:#ccccdc;font-weight:400;">0</div>
<div class="t" style="left:-634.3000000000002px;width:1000px;text-align:right;top:52.18px;font-size:18px;line-height:18px;color:#ccccdc;font-weight:400;">0</div>
<div style="position:absolute;left:17px;top:99px;width:21px;height:6px;background:#6ED0E0;border-radius:2px;"></div>
<div class="t" style="left:53px;top:92.46px;font-size:18px;line-height:18px;color:#ccccdc;font-weight:400;letter-spacing:-0.3px;">In Errors | PROD_VLAN</div>
<div class="t" style="left:-688.5px;width:1000px;text-align:right;top:92.46px;font-size:18px;line-height:18px;color:#ccccdc;font-weight:400;">0</div>
<div class="t" style="left:-634.3000000000002px;width:1000px;text-align:right;top:92.46px;font-size:18px;line-height:18px;color:#ccccdc;font-weight:400;">0</div>
<div style="position:absolute;left:14px;top:122px;width:356px;height:40px;background:#22252b;"></div>
<div style="position:absolute;left:17px;top:140px;width:21px;height:6px;background:#EF843C;border-radius:2px;"></div>
<div class="t" style="left:53px;top:132.74px;font-size:18px;line-height:18px;color:#ccccdc;font-weight:400;letter-spacing:-0.3px;">In Errors | TNG</div>
<div class="t" style="left:-688.5px;width:1000px;text-align:right;top:132.74px;font-size:18px;line-height:18px;color:#ccccdc;font-weight:400;">0</div>
<div class="t" style="left:-634.3000000000002px;width:1000px;text-align:right;top:132.74px;font-size:18px;line-height:18px;color:#ccccdc;font-weight:400;">0</div>
<div style="position:absolute;left:17px;top:180px;width:21px;height:6px;background:#E24D42;border-radius:2px;"></div>
<div class="t" style="left:53px;top:173.02px;font-size:18px;line-height:18px;color:#ccccdc;font-weight:400;letter-spacing:-0.3px;">In Errors | TNG_VLAN</div>
<div class="t" style="left:-688.5px;width:1000px;text-align:right;top:173.02px;font-size:18px;line-height:18px;color:#ccccdc;font-weight:400;">0</div>
<div class="t" style="left:-634.3000000000002px;width:1000px;text-align:right;top:173.02px;font-size:18px;line-height:18px;color:#ccccdc;font-weight:400;">0</div>
<div style="position:absolute;left:14px;top:202px;width:356px;height:40px;background:#22252b;"></div>
<div style="position:absolute;left:17px;top:220px;width:21px;height:6px;background:#1F78C1;border-radius:2px;"></div>
<div class="t" style="left:53px;top:213.30px;font-size:18px;line-height:18px;color:#ccccdc;font-weight:400;letter-spacing:-0.3px;">In Errors | defconf</div>
<div class="t" style="left:-688.5px;width:1000px;text-align:right;top:213.30px;font-size:18px;line-height:18px;color:#ccccdc;font-weight:400;">0</div>
<div class="t" style="left:-634.3000000000002px;width:1000px;text-align:right;top:213.30px;font-size:18px;line-height:18px;color:#ccccdc;font-weight:400;">0</div>
<div style="position:absolute;left:17px;top:260px;width:21px;height:6px;background:#BA43A9;border-radius:2px;"></div>
<div class="t" style="left:53px;top:253.58px;font-size:18px;line-height:18px;color:#ccccdc;font-weight:400;letter-spacing:-0.3px;">In Errors | ether1</div>
<div class="t" style="left:-688.5px;width:1000px;text-align:right;top:253.58px;font-size:18px;line-height:18px;color:#ccccdc;font-weight:400;">0</div>
<div class="t" style="left:-634.3000000000002px;width:1000px;text-align:right;top:253.58px;font-size:18px;line-height:18px;color:#ccccdc;font-weight:400;">0</div>
<div style="position:absolute;left:14px;top:283px;width:356px;height:40px;background:#22252b;"></div>
<div style="position:absolute;left:17px;top:301px;width:21px;height:6px;background:#705DA0;border-radius:2px;"></div>
<div class="t" style="left:53px;top:293.86px;font-size:18px;line-height:18px;color:#ccccdc;font-weight:400;letter-spacing:-0.3px;">In Errors | ether10</div>
<div class="t" style="left:-688.5px;width:1000px;text-align:right;top:293.86px;font-size:18px;line-height:18px;color:#ccccdc;font-weight:400;">0</div>
<div class="t" style="left:-634.3000000000002px;width:1000px;text-align:right;top:293.86px;font-size:18px;line-height:18px;color:#ccccdc;font-weight:400;">0</div>
<div style="position:absolute;left:17px;top:341px;width:21px;height:6px;background:#508642;border-radius:2px;"></div>
<div class="t" style="left:53px;top:334.14px;font-size:18px;line-height:18px;color:#ccccdc;font-weight:400;letter-spacing:-0.3px;">In Errors | ether8</div>
<div class="t" style="left:-688.5px;width:1000px;text-align:right;top:334.14px;font-size:18px;line-height:18px;color:#ccccdc;font-weight:400;">0</div>
<div class="t" style="left:-634.3000000000002px;width:1000px;text-align:right;top:334.14px;font-size:18px;line-height:18px;color:#ccccdc;font-weight:400;">0</div>
<div style="position:absolute;left:14px;top:363px;width:356px;height:40px;background:#22252b;"></div>
<div style="position:absolute;left:17px;top:381px;width:21px;height:6px;background:#CCA300;border-radius:2px;"></div>
<div class="t" style="left:53px;top:374.42px;font-size:18px;line-height:18px;color:#ccccdc;font-weight:400;letter-spacing:-0.3px;">In Errors | sfp1</div>
<div class="t" style="left:-688.5px;width:1000px;text-align:right;top:374.42px;font-size:18px;line-height:18px;color:#ccccdc;font-weight:400;">0</div>
<div class="t" style="left:-634.3000000000002px;width:1000px;text-align:right;top:374.42px;font-size:18px;line-height:18px;color:#ccccdc;font-weight:400;">0</div>
<div style="position:absolute;left:17px;top:422px;width:21px;height:6px;background:#447EBC;border-radius:2px;"></div>
<div class="t" style="left:53px;top:414.70px;font-size:18px;line-height:18px;color:#ccccdc;font-weight:400;letter-spacing:-0.3px;">Out Errors | BASE_VLAN</div>
<div class="t" style="left:-688.5px;width:1000px;text-align:right;top:414.70px;font-size:18px;line-height:18px;color:#ccccdc;font-weight:400;">0</div>
<div class="t" style="left:-634.3000000000002px;width:1000px;text-align:right;top:414.70px;font-size:18px;line-height:18px;color:#ccccdc;font-weight:400;">0</div>
<div style="position:absolute;left:14px;top:444px;width:356px;height:40px;background:#22252b;"></div>
<div style="position:absolute;left:17px;top:462px;width:21px;height:6px;background:#C15C17;border-radius:2px;"></div>
<div class="t" style="left:53px;top:454.98px;font-size:18px;line-height:18px;color:#ccccdc;font-weight:400;letter-spacing:-0.3px;">Out Errors | FAMILY_VLAN</div>
<div class="t" style="left:-688.5px;width:1000px;text-align:right;top:454.98px;font-size:18px;line-height:18px;color:#ccccdc;font-weight:400;">0</div>
<div class="t" style="left:-634.3000000000002px;width:1000px;text-align:right;top:454.98px;font-size:18px;line-height:18px;color:#ccccdc;font-weight:400;">0</div>
<div style="position:absolute;left:17px;top:502px;width:21px;height:6px;background:#890F02;border-radius:2px;"></div>
<div class="t" style="left:53px;top:495.26px;font-size:18px;line-height:18px;color:#ccccdc;font-weight:400;letter-spacing:-0.3px;">Out Errors | PROD_VLAN</div>
<div class="t" style="left:-688.5px;width:1000px;text-align:right;top:495.26px;font-size:18px;line-height:18px;color:#ccccdc;font-weight:400;">0</div>
<div class="t" style="left:-634.3000000000002px;width:1000px;text-align:right;top:495.26px;font-size:18px;line-height:18px;color:#ccccdc;font-weight:400;">0</div>
<div style="position:absolute;left:14px;top:524px;width:356px;height:40px;background:#22252b;"></div>
<div style="position:absolute;left:17px;top:542px;width:21px;height:6px;background:#0A437C;border-radius:2px;"></div>
<div class="t" style="left:53px;top:535.54px;font-size:18px;line-height:18px;color:#ccccdc;font-weight:400;letter-spacing:-0.3px;">Out Errors | TNG</div>
<div class="t" style="left:-688.5px;width:1000px;text-align:right;top:535.54px;font-size:18px;line-height:18px;color:#ccccdc;font-weight:400;">0</div>
<div class="t" style="left:-634.3000000000002px;width:1000px;text-align:right;top:535.54px;font-size:18px;line-height:18px;color:#ccccdc;font-weight:400;">0</div>
<div style="position:absolute;left:17px;top:583px;width:21px;height:6px;background:#6D1F62;border-radius:2px;"></div>
<div class="t" style="left:53px;top:575.82px;font-size:18px;line-height:18px;color:#ccccdc;font-weight:400;letter-spacing:-0.3px;">Out Errors | TNG_VLAN</div>
<div class="t" style="left:-688.5px;width:1000px;text-align:right;top:575.82px;font-size:18px;line-height:18px;color:#ccccdc;font-weight:400;">0</div>
<div class="t" style="left:-634.3000000000002px;width:1000px;text-align:right;top:575.82px;font-size:18px;line-height:18px;color:#ccccdc;font-weight:400;">0</div>
<div style="position:absolute;left:14px;top:605px;width:356px;height:40px;background:#22252b;"></div>
<div style="position:absolute;left:17px;top:623px;width:21px;height:6px;background:#584477;border-radius:2px;"></div>
<div class="t" style="left:53px;top:616.10px;font-size:18px;line-height:18px;color:#ccccdc;font-weight:400;letter-spacing:-0.3px;">Out Errors | defconf</div>
<div class="t" style="left:-688.5px;width:1000px;text-align:right;top:616.10px;font-size:18px;line-height:18px;color:#ccccdc;font-weight:400;">0</div>
<div class="t" style="left:-634.3000000000002px;width:1000px;text-align:right;top:616.10px;font-size:18px;line-height:18px;color:#ccccdc;font-weight:400;">0</div>
<div style="position:absolute;left:17px;top:663px;width:21px;height:6px;background:#B7DBAB;border-radius:2px;"></div>
<div class="t" style="left:53px;top:656.38px;font-size:18px;line-height:18px;color:#ccccdc;font-weight:400;letter-spacing:-0.3px;">Out Errors | ether1</div>
<div class="t" style="left:-688.5px;width:1000px;text-align:right;top:656.38px;font-size:18px;line-height:18px;color:#ccccdc;font-weight:400;">0</div>
<div class="t" style="left:-634.3000000000002px;width:1000px;text-align:right;top:656.38px;font-size:18px;line-height:18px;color:#ccccdc;font-weight:400;">0</div>
<div style="position:absolute;left:14px;top:685px;width:356px;height:40px;background:#22252b;"></div>
<div style="position:absolute;left:17px;top:703px;width:21px;height:6px;background:#F4D598;border-radius:2px;"></div>
<div class="t" style="left:53px;top:696.66px;font-size:18px;line-height:18px;color:#ccccdc;font-weight:400;letter-spacing:-0.3px;">Out Errors | ether10</div>
<div class="t" style="left:-688.5px;width:1000px;text-align:right;top:696.66px;font-size:18px;line-height:18px;color:#ccccdc;font-weight:400;">0</div>
<div class="t" style="left:-634.3000000000002px;width:1000px;text-align:right;top:696.66px;font-size:18px;line-height:18px;color:#ccccdc;font-weight:400;">0</div>
<div style="position:absolute;left:17px;top:744px;width:21px;height:6px;background:#70DBED;border-radius:2px;"></div>
<div class="t" style="left:53px;top:736.94px;font-size:18px;line-height:18px;color:#ccccdc;font-weight:400;letter-spacing:-0.3px;">Out Errors | ether8</div>
<div class="t" style="left:-688.5px;width:1000px;text-align:right;top:736.94px;font-size:18px;line-height:18px;color:#ccccdc;font-weight:400;">0</div>
<div class="t" style="left:-634.3000000000002px;width:1000px;text-align:right;top:736.94px;font-size:18px;line-height:18px;color:#ccccdc;font-weight:400;">0</div>
<div style="position:absolute;left:14px;top:766px;width:356px;height:40px;background:#22252b;"></div>
<div style="position:absolute;left:17px;top:784px;width:21px;height:6px;background:#F9BA8F;border-radius:2px;"></div>
<div class="t" style="left:53px;top:777.22px;font-size:18px;line-height:18px;color:#ccccdc;font-weight:400;letter-spacing:-0.3px;">Out Errors | sfp1</div>
<div class="t" style="left:-688.5px;width:1000px;text-align:right;top:777.22px;font-size:18px;line-height:18px;color:#ccccdc;font-weight:400;">0</div>
<div class="t" style="left:-634.3000000000002px;width:1000px;text-align:right;top:777.22px;font-size:18px;line-height:18px;color:#ccccdc;font-weight:400;">0</div>
</div>
</body></html>
